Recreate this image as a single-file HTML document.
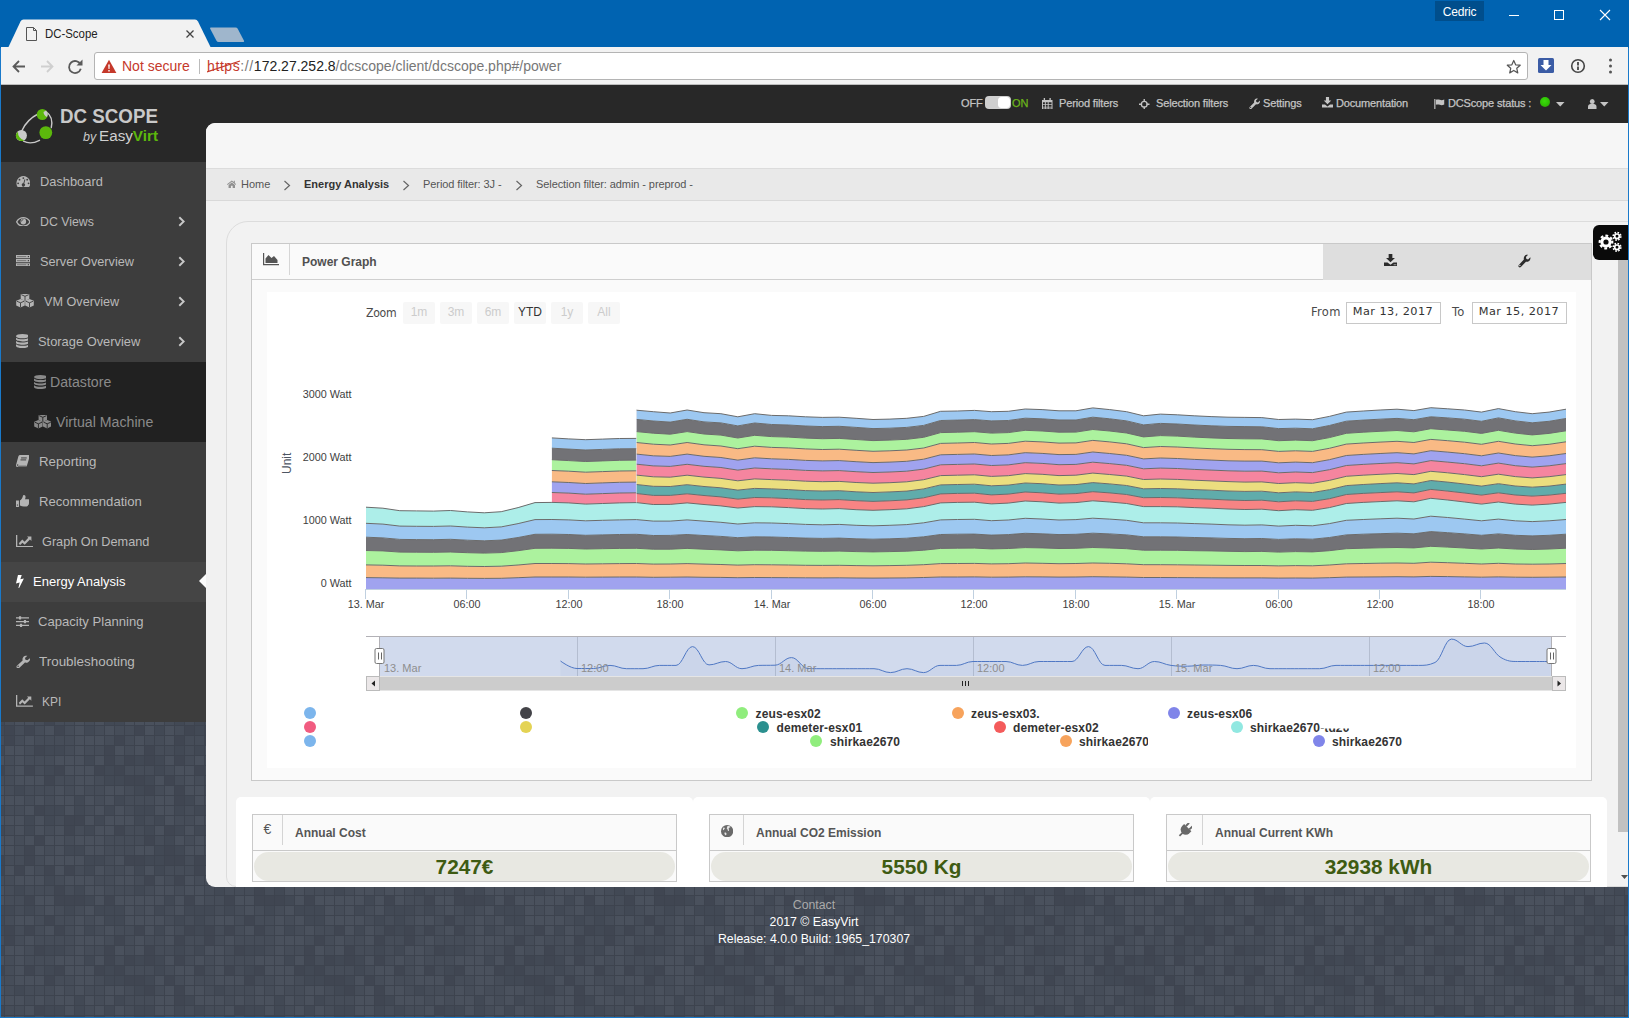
<!DOCTYPE html>
<html><head><meta charset="utf-8"><title>DC-Scope</title>
<style>
*{box-sizing:border-box}
html,body{margin:0;padding:0}
body{width:1629px;height:1018px;overflow:hidden;position:relative;background:#1979ca;font-family:"Liberation Sans",Arial,sans-serif;font-size:11px;color:#444}
.abs{position:absolute}
/* chrome */
#titlebar{position:absolute;left:0;top:0;width:1629px;height:48px;background:#0063b1}
#toolbar{position:absolute;left:1px;top:47px;width:1627px;height:38px;background:#f2f2f2;border-bottom:1px solid #bcbcbc}
#omni{position:absolute;left:93px;top:5px;width:1434px;height:28px;background:#fff;border:1px solid #b4b4b4;border-radius:3px}
#page{position:absolute;left:1px;top:85px;width:1627px;height:932px;overflow:hidden;background:#3d434e}
.bgpat{position:absolute;left:-1px;top:-85px}
#topnav{position:absolute;left:0;top:0;width:1627px;height:38px;background:#282828}
#logo{position:absolute;left:0;top:0;width:205px;height:77px;background:#282828}
#side{position:absolute;left:0;top:0;width:205px;height:637px}
.mi{position:absolute;left:0;width:205px;height:40px;background:#3d3d3d;color:#b9b9b9;font-size:13.5px;margin-top:-85px}
.mi.act{background:#454545;color:#fff}
.smi{position:absolute;left:0;width:205px;height:40px;background:#212121;color:#8a8a8a;font-size:15.5px;margin-top:-85px}
.mt{position:absolute;top:-0.500px;line-height:40px;white-space:nowrap;transform-origin:0 50%}
.chev{position:absolute;left:176.800px;top:13.800px;width:7px;height:11px}
.arr{position:absolute;right:0;top:12.300px;width:0;height:0;border-top:7.700px solid transparent;border-bottom:7.700px solid transparent;border-right:7.300px solid #fbfbfb}
#content{position:absolute;left:205px;top:38px;width:1422px;height:764px;background:#f1f1f1;border-radius:9px 0 0 9px;overflow:hidden}
#hdr{position:absolute;left:0;top:0;width:1422px;height:46px;background:#f6f6f6;border-bottom:1px solid #dcdcdc}
#bc{position:absolute;left:0;top:46px;width:1422px;height:32px;background:#e9e9e9;border-bottom:1px solid #d9d9d9;font-size:11px;color:#555}
#bc span{position:absolute;top:0;line-height:30px;white-space:nowrap}
#outer{position:absolute;left:20px;top:98px;width:1500px;height:666px;border:1px solid #dcdcdc;border-radius:22px 0 0 10px;background:#f2f2f2}
#panel{position:absolute;left:45px;top:120px;width:1341px;height:538px;border:1px solid #c9c9c9;background:#fafafa}
#phead{position:absolute;left:0;top:0;width:1339px;height:36px;border-bottom:1px solid #cfcfcf;background:#fafafa}
#ptools{position:absolute;left:1071px;top:0;width:268px;height:36px;background:#dedede}
#chart{position:absolute;left:15px;top:48px;width:1309px;height:476px;background:#fff}
.hc{position:absolute;left:0;top:0}
.hc text.ax{font-family:"Liberation Sans",Arial,sans-serif;font-size:10.800px;fill:#3e3e3e}
.hc text.ut{font-family:"Liberation Sans",Arial,sans-serif;font-size:12px;fill:#4d5663}
.hc text.nl{font-family:"Liberation Sans",Arial,sans-serif;font-size:11px;fill:#8e8e8e}
.zb{position:absolute;top:10px;width:32px;height:22px;background:#f7f7f7;border-radius:2px;color:#ccc;font-size:12px;line-height:21px;text-align:center}
.lg{position:absolute;font-weight:bold;font-size:12px;color:#333;white-space:nowrap;line-height:14px;letter-spacing:.13px}
.dot{position:absolute;width:12px;height:12px;border-radius:6px}
.cardw{position:absolute;top:674px;height:100px;background:#fff;border-radius:5px 5px 0 0}
.card{position:absolute;top:17px;left:16px;width:425px;height:68px;border:1px solid #c9c9c9;background:#fafafa}
.card .ci{position:absolute;left:0;top:0;width:30px;height:30px;border-right:1px solid #d4d4d4}
.card .ct{position:absolute;left:42px;top:1px;line-height:35px;font-weight:bold;font-size:12px;color:#555}
.card .cv{position:absolute;left:0;top:35px;width:423px;height:31px;border-top:1px solid #c9c9c9}
.card .pill{position:absolute;left:1px;top:1px;width:421px;height:29px;border-radius:15px;background:#e8e8e2;text-align:center;font-weight:bold;font-size:20.800px;line-height:30px;color:#3e5b12}
#foot{position:absolute;left:600px;top:812px;width:426px;text-align:center;color:#fff;font-size:12.300px;line-height:17px}
.tn{position:absolute;top:0;line-height:37px;color:#c4c4c4;font-size:11px;white-space:nowrap;-webkit-text-stroke:0.25px #c4c4c4;letter-spacing:-0.150px}
.dj{line-height:20.500px;font-size:11.500px;color:#4a4a4a;font-family:"DejaVu Sans","Liberation Sans",sans-serif;letter-spacing:.3px}
.di{width:95px;height:22px;border:1px solid #c8c8c8;background:#fff;text-align:center;line-height:18.500px;font-size:11.300px;color:#333;font-family:"DejaVu Sans","Liberation Sans",sans-serif;letter-spacing:.42px;white-space:nowrap;text-indent:-1px}
</style></head><body>
<div id="titlebar">
 <svg class="abs" style="left:0;top:0" width="1629" height="48">
  <path d="M8 48 L20.500 21.500 Q21.500 19.500 23.500 19.500 H195 Q197 19.500 198 21.500 L211 48z" fill="#f2f2f2"/>
  <path d="M211 27.500 h24.500 q1.500 0 2.200 1.300 l6.300 12 q.6 1.200-.8 1.200 h-24.500 q-1.500 0-2.200-1.300 l-6.300-12 q-.6-1.200 .8-1.200z" fill="#9fb6cc"/>
  <path d="M26.500 27.500h7l3 3v10h-10z M33.500 27.500v3h3" fill="none" stroke="#555" stroke-width="1"/>
  <path d="M186.500 30.500l7 7m0-7l-7 7" stroke="#444" stroke-width="1.300" fill="none"/>
  <rect x="1435" y="1" width="49" height="20" fill="#004e8c"/>
  <path d="M1509 15.500h10" stroke="#fff" stroke-width="1"/>
  <rect x="1554.500" y="10.500" width="9" height="9" fill="none" stroke="#fff" stroke-width="1"/>
  <path d="M1600 10l10 10m0-10l-10 10" stroke="#fff" stroke-width="1.100" fill="none"/>
 </svg>
 <span class="abs" style="left:45px;top:26px;font-size:12px;line-height:16px;color:#222;transform:scaleX(.95);transform-origin:0 0;white-space:nowrap">DC-Scope</span>
 <span class="abs" style="left:1435px;top:1px;width:49px;text-align:center;font-size:12px;line-height:22px;color:#fff;letter-spacing:-0.200px">Cedric</span>
</div>
<div id="toolbar">
 <svg class="abs" style="left:0;top:0" width="92" height="38">
  <path d="M24 19.500H12.500m5.500-5.500l-5.500 5.500 5.500 5.500" fill="none" stroke="#5a5a5a" stroke-width="1.800"/>
  <path d="M40 19.500h11.500m-5.500-5.500l5.500 5.500-5.500 5.500" fill="none" stroke="#cfcfcf" stroke-width="1.800"/>
  <path d="M79.500 17.500a6 6 0 1 0 .3 4.300" fill="none" stroke="#5a5a5a" stroke-width="1.800"/>
  <path d="M81.500 12.500v6h-6z" fill="#5a5a5a"/>
 </svg>
 <div id="omni">
  <svg class="abs" style="left:6px;top:6px" width="16" height="15"><path d="M8 .8L15.400 14H.6z" fill="#c5392b"/><path d="M7.200 5.500h1.600l-.3 4.500H7.500zM7.300 11h1.400v1.400H7.300z" fill="#fff"/></svg>
  <span class="abs" style="left:27px;top:0;line-height:26px;font-size:14px;color:#c5392b">Not secure</span>
  <i class="abs" style="left:104px;top:6px;width:1px;height:15px;background:#bbb"></i>
  <span class="abs" style="left:112px;top:0;line-height:26px;font-size:14px;color:#777;white-space:nowrap"><span style="letter-spacing:.6px"><span style="color:#c5392b">https</span>://</span><span style="color:#222">172.27.252.8</span>/dcscope/client/dcscope.php#/power</span>
  <svg class="abs" style="left:112px;top:6px" width="36" height="16"><path d="M0 13L33 2" stroke="#c5392b" stroke-width="1.300"/></svg>
  <svg class="abs" style="left:1411px;top:6px" width="15.500" height="15" viewBox="0 0 18 17"><path d="M9 1.500l2.200 5 5.300.5-4 3.600 1.200 5.300L9 13.100l-4.700 2.800 1.200-5.300-4-3.600 5.300-.5z" fill="none" stroke="#555" stroke-width="1.400" stroke-linejoin="round"/></svg>
 </div>
 <svg class="abs" style="left:1536px;top:10px" width="90" height="18">
  <rect x="1" y="1" width="16" height="15" rx="1.500" fill="#3b5ca5"/>
  <path d="M6.500 3h5v5h3L9 13.500 3.500 8h3z" fill="#fff"/>
  <circle cx="41" cy="9" r="6.300" fill="none" stroke="#444" stroke-width="1.600"/>
  <path d="M41 5v3.500M41 9.500v3.500" stroke="#444" stroke-width="1.800"/>
  <circle cx="73.500" cy="3" r="1.500" fill="#555"/><circle cx="73.500" cy="9" r="1.500" fill="#555"/><circle cx="73.500" cy="15" r="1.500" fill="#555"/>
 </svg>
</div>
<div id="page">
<svg class="bgpat" width="1629" height="1018"><defs><pattern id="tp" width="200" height="200" patternUnits="userSpaceOnUse" x="4" y="5"><rect width="200" height="200" fill="#3d434e"/><rect x="1" y="1" width="9" height="9" fill="#464d59"/><rect x="11" y="1" width="9" height="9" fill="#464d59"/><rect x="21" y="1" width="9" height="9" fill="#4a515d"/><rect x="31" y="1" width="9" height="9" fill="#404652"/><rect x="41" y="1" width="9" height="9" fill="#424955"/><rect x="51" y="1" width="9" height="9" fill="#424955"/><rect x="61" y="1" width="9" height="9" fill="#4a515d"/><rect x="71" y="1" width="9" height="9" fill="#424955"/><rect x="81" y="1" width="9" height="9" fill="#464d59"/><rect x="91" y="1" width="9" height="9" fill="#4a515d"/><rect x="101" y="1" width="9" height="9" fill="#424955"/><rect x="111" y="1" width="9" height="9" fill="#4a515d"/><rect x="121" y="1" width="9" height="9" fill="#464d59"/><rect x="131" y="1" width="9" height="9" fill="#424955"/><rect x="141" y="1" width="9" height="9" fill="#424955"/><rect x="151" y="1" width="9" height="9" fill="#4a515d"/><rect x="161" y="1" width="9" height="9" fill="#4a515d"/><rect x="171" y="1" width="9" height="9" fill="#424955"/><rect x="181" y="1" width="9" height="9" fill="#464d59"/><rect x="191" y="1" width="9" height="9" fill="#424955"/><rect x="1" y="11" width="9" height="9" fill="#4a515d"/><rect x="11" y="11" width="9" height="9" fill="#4a515d"/><rect x="21" y="11" width="9" height="9" fill="#424955"/><rect x="31" y="11" width="9" height="9" fill="#4a515d"/><rect x="41" y="11" width="9" height="9" fill="#424955"/><rect x="51" y="11" width="9" height="9" fill="#464d59"/><rect x="61" y="11" width="9" height="9" fill="#404652"/><rect x="71" y="11" width="9" height="9" fill="#404652"/><rect x="81" y="11" width="9" height="9" fill="#4a515d"/><rect x="91" y="11" width="9" height="9" fill="#424955"/><rect x="101" y="11" width="9" height="9" fill="#4a515d"/><rect x="111" y="11" width="9" height="9" fill="#4a515d"/><rect x="121" y="11" width="9" height="9" fill="#4a515d"/><rect x="131" y="11" width="9" height="9" fill="#424955"/><rect x="141" y="11" width="9" height="9" fill="#464d59"/><rect x="151" y="11" width="9" height="9" fill="#424955"/><rect x="161" y="11" width="9" height="9" fill="#4a515d"/><rect x="171" y="11" width="9" height="9" fill="#464d59"/><rect x="181" y="11" width="9" height="9" fill="#464d59"/><rect x="191" y="11" width="9" height="9" fill="#4a515d"/><rect x="1" y="21" width="9" height="9" fill="#464d59"/><rect x="11" y="21" width="9" height="9" fill="#4a515d"/><rect x="21" y="21" width="9" height="9" fill="#424955"/><rect x="31" y="21" width="9" height="9" fill="#4a515d"/><rect x="41" y="21" width="9" height="9" fill="#464d59"/><rect x="51" y="21" width="9" height="9" fill="#4a515d"/><rect x="61" y="21" width="9" height="9" fill="#404652"/><rect x="71" y="21" width="9" height="9" fill="#464d59"/><rect x="81" y="21" width="9" height="9" fill="#424955"/><rect x="91" y="21" width="9" height="9" fill="#4a515d"/><rect x="101" y="21" width="9" height="9" fill="#4a515d"/><rect x="111" y="21" width="9" height="9" fill="#404652"/><rect x="121" y="21" width="9" height="9" fill="#464d59"/><rect x="131" y="21" width="9" height="9" fill="#464d59"/><rect x="141" y="21" width="9" height="9" fill="#424955"/><rect x="151" y="21" width="9" height="9" fill="#4a515d"/><rect x="161" y="21" width="9" height="9" fill="#404652"/><rect x="171" y="21" width="9" height="9" fill="#424955"/><rect x="181" y="21" width="9" height="9" fill="#4a515d"/><rect x="191" y="21" width="9" height="9" fill="#424955"/><rect x="1" y="31" width="9" height="9" fill="#4a515d"/><rect x="11" y="31" width="9" height="9" fill="#464d59"/><rect x="21" y="31" width="9" height="9" fill="#4a515d"/><rect x="31" y="31" width="9" height="9" fill="#404652"/><rect x="41" y="31" width="9" height="9" fill="#4a515d"/><rect x="51" y="31" width="9" height="9" fill="#4a515d"/><rect x="61" y="31" width="9" height="9" fill="#464d59"/><rect x="71" y="31" width="9" height="9" fill="#4a515d"/><rect x="81" y="31" width="9" height="9" fill="#4a515d"/><rect x="91" y="31" width="9" height="9" fill="#4a515d"/><rect x="101" y="31" width="9" height="9" fill="#464d59"/><rect x="111" y="31" width="9" height="9" fill="#464d59"/><rect x="121" y="31" width="9" height="9" fill="#464d59"/><rect x="131" y="31" width="9" height="9" fill="#464d59"/><rect x="141" y="31" width="9" height="9" fill="#404652"/><rect x="151" y="31" width="9" height="9" fill="#464d59"/><rect x="161" y="31" width="9" height="9" fill="#424955"/><rect x="171" y="31" width="9" height="9" fill="#4a515d"/><rect x="181" y="31" width="9" height="9" fill="#464d59"/><rect x="191" y="31" width="9" height="9" fill="#4a515d"/><rect x="1" y="41" width="9" height="9" fill="#4a515d"/><rect x="11" y="41" width="9" height="9" fill="#464d59"/><rect x="21" y="41" width="9" height="9" fill="#404652"/><rect x="31" y="41" width="9" height="9" fill="#4a515d"/><rect x="41" y="41" width="9" height="9" fill="#464d59"/><rect x="51" y="41" width="9" height="9" fill="#4a515d"/><rect x="61" y="41" width="9" height="9" fill="#424955"/><rect x="71" y="41" width="9" height="9" fill="#424955"/><rect x="81" y="41" width="9" height="9" fill="#4a515d"/><rect x="91" y="41" width="9" height="9" fill="#4a515d"/><rect x="101" y="41" width="9" height="9" fill="#464d59"/><rect x="111" y="41" width="9" height="9" fill="#464d59"/><rect x="121" y="41" width="9" height="9" fill="#464d59"/><rect x="131" y="41" width="9" height="9" fill="#4a515d"/><rect x="141" y="41" width="9" height="9" fill="#4a515d"/><rect x="151" y="41" width="9" height="9" fill="#424955"/><rect x="161" y="41" width="9" height="9" fill="#404652"/><rect x="171" y="41" width="9" height="9" fill="#424955"/><rect x="181" y="41" width="9" height="9" fill="#4a515d"/><rect x="191" y="41" width="9" height="9" fill="#4a515d"/><rect x="1" y="51" width="9" height="9" fill="#464d59"/><rect x="11" y="51" width="9" height="9" fill="#464d59"/><rect x="21" y="51" width="9" height="9" fill="#404652"/><rect x="31" y="51" width="9" height="9" fill="#464d59"/><rect x="41" y="51" width="9" height="9" fill="#4a515d"/><rect x="51" y="51" width="9" height="9" fill="#4a515d"/><rect x="61" y="51" width="9" height="9" fill="#4a515d"/><rect x="71" y="51" width="9" height="9" fill="#4a515d"/><rect x="81" y="51" width="9" height="9" fill="#424955"/><rect x="91" y="51" width="9" height="9" fill="#424955"/><rect x="101" y="51" width="9" height="9" fill="#464d59"/><rect x="111" y="51" width="9" height="9" fill="#4a515d"/><rect x="121" y="51" width="9" height="9" fill="#404652"/><rect x="131" y="51" width="9" height="9" fill="#404652"/><rect x="141" y="51" width="9" height="9" fill="#424955"/><rect x="151" y="51" width="9" height="9" fill="#424955"/><rect x="161" y="51" width="9" height="9" fill="#404652"/><rect x="171" y="51" width="9" height="9" fill="#404652"/><rect x="181" y="51" width="9" height="9" fill="#464d59"/><rect x="191" y="51" width="9" height="9" fill="#404652"/><rect x="1" y="61" width="9" height="9" fill="#4a515d"/><rect x="11" y="61" width="9" height="9" fill="#404652"/><rect x="21" y="61" width="9" height="9" fill="#4a515d"/><rect x="31" y="61" width="9" height="9" fill="#464d59"/><rect x="41" y="61" width="9" height="9" fill="#404652"/><rect x="51" y="61" width="9" height="9" fill="#4a515d"/><rect x="61" y="61" width="9" height="9" fill="#404652"/><rect x="71" y="61" width="9" height="9" fill="#464d59"/><rect x="81" y="61" width="9" height="9" fill="#424955"/><rect x="91" y="61" width="9" height="9" fill="#4a515d"/><rect x="101" y="61" width="9" height="9" fill="#464d59"/><rect x="111" y="61" width="9" height="9" fill="#464d59"/><rect x="121" y="61" width="9" height="9" fill="#4a515d"/><rect x="131" y="61" width="9" height="9" fill="#424955"/><rect x="141" y="61" width="9" height="9" fill="#4a515d"/><rect x="151" y="61" width="9" height="9" fill="#424955"/><rect x="161" y="61" width="9" height="9" fill="#464d59"/><rect x="171" y="61" width="9" height="9" fill="#464d59"/><rect x="181" y="61" width="9" height="9" fill="#464d59"/><rect x="191" y="61" width="9" height="9" fill="#404652"/><rect x="1" y="71" width="9" height="9" fill="#464d59"/><rect x="11" y="71" width="9" height="9" fill="#4a515d"/><rect x="21" y="71" width="9" height="9" fill="#4a515d"/><rect x="31" y="71" width="9" height="9" fill="#4a515d"/><rect x="41" y="71" width="9" height="9" fill="#424955"/><rect x="51" y="71" width="9" height="9" fill="#464d59"/><rect x="61" y="71" width="9" height="9" fill="#4a515d"/><rect x="71" y="71" width="9" height="9" fill="#4a515d"/><rect x="81" y="71" width="9" height="9" fill="#4a515d"/><rect x="91" y="71" width="9" height="9" fill="#464d59"/><rect x="101" y="71" width="9" height="9" fill="#464d59"/><rect x="111" y="71" width="9" height="9" fill="#4a515d"/><rect x="121" y="71" width="9" height="9" fill="#4a515d"/><rect x="131" y="71" width="9" height="9" fill="#464d59"/><rect x="141" y="71" width="9" height="9" fill="#404652"/><rect x="151" y="71" width="9" height="9" fill="#4a515d"/><rect x="161" y="71" width="9" height="9" fill="#464d59"/><rect x="171" y="71" width="9" height="9" fill="#404652"/><rect x="181" y="71" width="9" height="9" fill="#4a515d"/><rect x="191" y="71" width="9" height="9" fill="#464d59"/><rect x="1" y="81" width="9" height="9" fill="#464d59"/><rect x="11" y="81" width="9" height="9" fill="#424955"/><rect x="21" y="81" width="9" height="9" fill="#464d59"/><rect x="31" y="81" width="9" height="9" fill="#464d59"/><rect x="41" y="81" width="9" height="9" fill="#464d59"/><rect x="51" y="81" width="9" height="9" fill="#404652"/><rect x="61" y="81" width="9" height="9" fill="#464d59"/><rect x="71" y="81" width="9" height="9" fill="#424955"/><rect x="81" y="81" width="9" height="9" fill="#4a515d"/><rect x="91" y="81" width="9" height="9" fill="#4a515d"/><rect x="101" y="81" width="9" height="9" fill="#464d59"/><rect x="111" y="81" width="9" height="9" fill="#464d59"/><rect x="121" y="81" width="9" height="9" fill="#464d59"/><rect x="131" y="81" width="9" height="9" fill="#424955"/><rect x="141" y="81" width="9" height="9" fill="#464d59"/><rect x="151" y="81" width="9" height="9" fill="#4a515d"/><rect x="161" y="81" width="9" height="9" fill="#4a515d"/><rect x="171" y="81" width="9" height="9" fill="#464d59"/><rect x="181" y="81" width="9" height="9" fill="#4a515d"/><rect x="191" y="81" width="9" height="9" fill="#4a515d"/><rect x="1" y="91" width="9" height="9" fill="#464d59"/><rect x="11" y="91" width="9" height="9" fill="#464d59"/><rect x="21" y="91" width="9" height="9" fill="#404652"/><rect x="31" y="91" width="9" height="9" fill="#4a515d"/><rect x="41" y="91" width="9" height="9" fill="#4a515d"/><rect x="51" y="91" width="9" height="9" fill="#404652"/><rect x="61" y="91" width="9" height="9" fill="#404652"/><rect x="71" y="91" width="9" height="9" fill="#404652"/><rect x="81" y="91" width="9" height="9" fill="#424955"/><rect x="91" y="91" width="9" height="9" fill="#4a515d"/><rect x="101" y="91" width="9" height="9" fill="#404652"/><rect x="111" y="91" width="9" height="9" fill="#4a515d"/><rect x="121" y="91" width="9" height="9" fill="#4a515d"/><rect x="131" y="91" width="9" height="9" fill="#4a515d"/><rect x="141" y="91" width="9" height="9" fill="#4a515d"/><rect x="151" y="91" width="9" height="9" fill="#4a515d"/><rect x="161" y="91" width="9" height="9" fill="#424955"/><rect x="171" y="91" width="9" height="9" fill="#4a515d"/><rect x="181" y="91" width="9" height="9" fill="#404652"/><rect x="191" y="91" width="9" height="9" fill="#4a515d"/><rect x="1" y="101" width="9" height="9" fill="#424955"/><rect x="11" y="101" width="9" height="9" fill="#464d59"/><rect x="21" y="101" width="9" height="9" fill="#424955"/><rect x="31" y="101" width="9" height="9" fill="#464d59"/><rect x="41" y="101" width="9" height="9" fill="#4a515d"/><rect x="51" y="101" width="9" height="9" fill="#464d59"/><rect x="61" y="101" width="9" height="9" fill="#424955"/><rect x="71" y="101" width="9" height="9" fill="#464d59"/><rect x="81" y="101" width="9" height="9" fill="#4a515d"/><rect x="91" y="101" width="9" height="9" fill="#424955"/><rect x="101" y="101" width="9" height="9" fill="#424955"/><rect x="111" y="101" width="9" height="9" fill="#424955"/><rect x="121" y="101" width="9" height="9" fill="#4a515d"/><rect x="131" y="101" width="9" height="9" fill="#464d59"/><rect x="141" y="101" width="9" height="9" fill="#4a515d"/><rect x="151" y="101" width="9" height="9" fill="#424955"/><rect x="161" y="101" width="9" height="9" fill="#464d59"/><rect x="171" y="101" width="9" height="9" fill="#4a515d"/><rect x="181" y="101" width="9" height="9" fill="#424955"/><rect x="191" y="101" width="9" height="9" fill="#424955"/><rect x="1" y="111" width="9" height="9" fill="#464d59"/><rect x="11" y="111" width="9" height="9" fill="#4a515d"/><rect x="21" y="111" width="9" height="9" fill="#4a515d"/><rect x="31" y="111" width="9" height="9" fill="#464d59"/><rect x="41" y="111" width="9" height="9" fill="#404652"/><rect x="51" y="111" width="9" height="9" fill="#464d59"/><rect x="61" y="111" width="9" height="9" fill="#464d59"/><rect x="71" y="111" width="9" height="9" fill="#4a515d"/><rect x="81" y="111" width="9" height="9" fill="#464d59"/><rect x="91" y="111" width="9" height="9" fill="#4a515d"/><rect x="101" y="111" width="9" height="9" fill="#424955"/><rect x="111" y="111" width="9" height="9" fill="#424955"/><rect x="121" y="111" width="9" height="9" fill="#4a515d"/><rect x="131" y="111" width="9" height="9" fill="#4a515d"/><rect x="141" y="111" width="9" height="9" fill="#4a515d"/><rect x="151" y="111" width="9" height="9" fill="#4a515d"/><rect x="161" y="111" width="9" height="9" fill="#464d59"/><rect x="171" y="111" width="9" height="9" fill="#424955"/><rect x="181" y="111" width="9" height="9" fill="#464d59"/><rect x="191" y="111" width="9" height="9" fill="#424955"/><rect x="1" y="121" width="9" height="9" fill="#404652"/><rect x="11" y="121" width="9" height="9" fill="#464d59"/><rect x="21" y="121" width="9" height="9" fill="#404652"/><rect x="31" y="121" width="9" height="9" fill="#464d59"/><rect x="41" y="121" width="9" height="9" fill="#4a515d"/><rect x="51" y="121" width="9" height="9" fill="#404652"/><rect x="61" y="121" width="9" height="9" fill="#464d59"/><rect x="71" y="121" width="9" height="9" fill="#4a515d"/><rect x="81" y="121" width="9" height="9" fill="#424955"/><rect x="91" y="121" width="9" height="9" fill="#464d59"/><rect x="101" y="121" width="9" height="9" fill="#4a515d"/><rect x="111" y="121" width="9" height="9" fill="#464d59"/><rect x="121" y="121" width="9" height="9" fill="#464d59"/><rect x="131" y="121" width="9" height="9" fill="#404652"/><rect x="141" y="121" width="9" height="9" fill="#4a515d"/><rect x="151" y="121" width="9" height="9" fill="#424955"/><rect x="161" y="121" width="9" height="9" fill="#4a515d"/><rect x="171" y="121" width="9" height="9" fill="#464d59"/><rect x="181" y="121" width="9" height="9" fill="#404652"/><rect x="191" y="121" width="9" height="9" fill="#424955"/><rect x="1" y="131" width="9" height="9" fill="#404652"/><rect x="11" y="131" width="9" height="9" fill="#464d59"/><rect x="21" y="131" width="9" height="9" fill="#4a515d"/><rect x="31" y="131" width="9" height="9" fill="#464d59"/><rect x="41" y="131" width="9" height="9" fill="#464d59"/><rect x="51" y="131" width="9" height="9" fill="#464d59"/><rect x="61" y="131" width="9" height="9" fill="#464d59"/><rect x="71" y="131" width="9" height="9" fill="#4a515d"/><rect x="81" y="131" width="9" height="9" fill="#4a515d"/><rect x="91" y="131" width="9" height="9" fill="#4a515d"/><rect x="101" y="131" width="9" height="9" fill="#464d59"/><rect x="111" y="131" width="9" height="9" fill="#404652"/><rect x="121" y="131" width="9" height="9" fill="#464d59"/><rect x="131" y="131" width="9" height="9" fill="#4a515d"/><rect x="141" y="131" width="9" height="9" fill="#464d59"/><rect x="151" y="131" width="9" height="9" fill="#464d59"/><rect x="161" y="131" width="9" height="9" fill="#4a515d"/><rect x="171" y="131" width="9" height="9" fill="#404652"/><rect x="181" y="131" width="9" height="9" fill="#464d59"/><rect x="191" y="131" width="9" height="9" fill="#464d59"/><rect x="1" y="141" width="9" height="9" fill="#4a515d"/><rect x="11" y="141" width="9" height="9" fill="#4a515d"/><rect x="21" y="141" width="9" height="9" fill="#464d59"/><rect x="31" y="141" width="9" height="9" fill="#404652"/><rect x="41" y="141" width="9" height="9" fill="#424955"/><rect x="51" y="141" width="9" height="9" fill="#424955"/><rect x="61" y="141" width="9" height="9" fill="#464d59"/><rect x="71" y="141" width="9" height="9" fill="#4a515d"/><rect x="81" y="141" width="9" height="9" fill="#464d59"/><rect x="91" y="141" width="9" height="9" fill="#464d59"/><rect x="101" y="141" width="9" height="9" fill="#404652"/><rect x="111" y="141" width="9" height="9" fill="#4a515d"/><rect x="121" y="141" width="9" height="9" fill="#464d59"/><rect x="131" y="141" width="9" height="9" fill="#4a515d"/><rect x="141" y="141" width="9" height="9" fill="#404652"/><rect x="151" y="141" width="9" height="9" fill="#464d59"/><rect x="161" y="141" width="9" height="9" fill="#464d59"/><rect x="171" y="141" width="9" height="9" fill="#424955"/><rect x="181" y="141" width="9" height="9" fill="#464d59"/><rect x="191" y="141" width="9" height="9" fill="#424955"/><rect x="1" y="151" width="9" height="9" fill="#464d59"/><rect x="11" y="151" width="9" height="9" fill="#4a515d"/><rect x="21" y="151" width="9" height="9" fill="#464d59"/><rect x="31" y="151" width="9" height="9" fill="#464d59"/><rect x="41" y="151" width="9" height="9" fill="#464d59"/><rect x="51" y="151" width="9" height="9" fill="#4a515d"/><rect x="61" y="151" width="9" height="9" fill="#4a515d"/><rect x="71" y="151" width="9" height="9" fill="#4a515d"/><rect x="81" y="151" width="9" height="9" fill="#424955"/><rect x="91" y="151" width="9" height="9" fill="#4a515d"/><rect x="101" y="151" width="9" height="9" fill="#404652"/><rect x="111" y="151" width="9" height="9" fill="#464d59"/><rect x="121" y="151" width="9" height="9" fill="#404652"/><rect x="131" y="151" width="9" height="9" fill="#424955"/><rect x="141" y="151" width="9" height="9" fill="#404652"/><rect x="151" y="151" width="9" height="9" fill="#424955"/><rect x="161" y="151" width="9" height="9" fill="#4a515d"/><rect x="171" y="151" width="9" height="9" fill="#404652"/><rect x="181" y="151" width="9" height="9" fill="#464d59"/><rect x="191" y="151" width="9" height="9" fill="#4a515d"/><rect x="1" y="161" width="9" height="9" fill="#464d59"/><rect x="11" y="161" width="9" height="9" fill="#4a515d"/><rect x="21" y="161" width="9" height="9" fill="#404652"/><rect x="31" y="161" width="9" height="9" fill="#464d59"/><rect x="41" y="161" width="9" height="9" fill="#424955"/><rect x="51" y="161" width="9" height="9" fill="#404652"/><rect x="61" y="161" width="9" height="9" fill="#4a515d"/><rect x="71" y="161" width="9" height="9" fill="#4a515d"/><rect x="81" y="161" width="9" height="9" fill="#4a515d"/><rect x="91" y="161" width="9" height="9" fill="#404652"/><rect x="101" y="161" width="9" height="9" fill="#424955"/><rect x="111" y="161" width="9" height="9" fill="#404652"/><rect x="121" y="161" width="9" height="9" fill="#464d59"/><rect x="131" y="161" width="9" height="9" fill="#464d59"/><rect x="141" y="161" width="9" height="9" fill="#464d59"/><rect x="151" y="161" width="9" height="9" fill="#424955"/><rect x="161" y="161" width="9" height="9" fill="#464d59"/><rect x="171" y="161" width="9" height="9" fill="#4a515d"/><rect x="181" y="161" width="9" height="9" fill="#4a515d"/><rect x="191" y="161" width="9" height="9" fill="#404652"/><rect x="1" y="171" width="9" height="9" fill="#464d59"/><rect x="11" y="171" width="9" height="9" fill="#4a515d"/><rect x="21" y="171" width="9" height="9" fill="#4a515d"/><rect x="31" y="171" width="9" height="9" fill="#4a515d"/><rect x="41" y="171" width="9" height="9" fill="#404652"/><rect x="51" y="171" width="9" height="9" fill="#464d59"/><rect x="61" y="171" width="9" height="9" fill="#464d59"/><rect x="71" y="171" width="9" height="9" fill="#4a515d"/><rect x="81" y="171" width="9" height="9" fill="#4a515d"/><rect x="91" y="171" width="9" height="9" fill="#464d59"/><rect x="101" y="171" width="9" height="9" fill="#424955"/><rect x="111" y="171" width="9" height="9" fill="#424955"/><rect x="121" y="171" width="9" height="9" fill="#404652"/><rect x="131" y="171" width="9" height="9" fill="#404652"/><rect x="141" y="171" width="9" height="9" fill="#424955"/><rect x="151" y="171" width="9" height="9" fill="#4a515d"/><rect x="161" y="171" width="9" height="9" fill="#404652"/><rect x="171" y="171" width="9" height="9" fill="#464d59"/><rect x="181" y="171" width="9" height="9" fill="#4a515d"/><rect x="191" y="171" width="9" height="9" fill="#464d59"/><rect x="1" y="181" width="9" height="9" fill="#464d59"/><rect x="11" y="181" width="9" height="9" fill="#424955"/><rect x="21" y="181" width="9" height="9" fill="#464d59"/><rect x="31" y="181" width="9" height="9" fill="#464d59"/><rect x="41" y="181" width="9" height="9" fill="#464d59"/><rect x="51" y="181" width="9" height="9" fill="#4a515d"/><rect x="61" y="181" width="9" height="9" fill="#464d59"/><rect x="71" y="181" width="9" height="9" fill="#4a515d"/><rect x="81" y="181" width="9" height="9" fill="#464d59"/><rect x="91" y="181" width="9" height="9" fill="#464d59"/><rect x="101" y="181" width="9" height="9" fill="#4a515d"/><rect x="111" y="181" width="9" height="9" fill="#4a515d"/><rect x="121" y="181" width="9" height="9" fill="#464d59"/><rect x="131" y="181" width="9" height="9" fill="#424955"/><rect x="141" y="181" width="9" height="9" fill="#404652"/><rect x="151" y="181" width="9" height="9" fill="#464d59"/><rect x="161" y="181" width="9" height="9" fill="#4a515d"/><rect x="171" y="181" width="9" height="9" fill="#404652"/><rect x="181" y="181" width="9" height="9" fill="#4a515d"/><rect x="191" y="181" width="9" height="9" fill="#4a515d"/><rect x="1" y="191" width="9" height="9" fill="#4a515d"/><rect x="11" y="191" width="9" height="9" fill="#4a515d"/><rect x="21" y="191" width="9" height="9" fill="#464d59"/><rect x="31" y="191" width="9" height="9" fill="#4a515d"/><rect x="41" y="191" width="9" height="9" fill="#464d59"/><rect x="51" y="191" width="9" height="9" fill="#4a515d"/><rect x="61" y="191" width="9" height="9" fill="#4a515d"/><rect x="71" y="191" width="9" height="9" fill="#424955"/><rect x="81" y="191" width="9" height="9" fill="#4a515d"/><rect x="91" y="191" width="9" height="9" fill="#464d59"/><rect x="101" y="191" width="9" height="9" fill="#4a515d"/><rect x="111" y="191" width="9" height="9" fill="#424955"/><rect x="121" y="191" width="9" height="9" fill="#464d59"/><rect x="131" y="191" width="9" height="9" fill="#464d59"/><rect x="141" y="191" width="9" height="9" fill="#464d59"/><rect x="151" y="191" width="9" height="9" fill="#4a515d"/><rect x="161" y="191" width="9" height="9" fill="#4a515d"/><rect x="171" y="191" width="9" height="9" fill="#404652"/><rect x="181" y="191" width="9" height="9" fill="#424955"/><rect x="191" y="191" width="9" height="9" fill="#4a515d"/></pattern></defs><rect width="1629" height="1018" fill="url(#tp)"/></svg>
<div id="topnav"></div><div class="abs" style="left:205px;top:38px;width:12px;height:12px;background:#282828"></div>
<div id="logo">
 <svg class="abs" style="left:14px;top:23px" width="42" height="40" viewBox="0 0 42 40">
  <g fill="none" stroke="#c9c9c9" stroke-width="1.400" stroke-linecap="round"><path d="M7 22.500Q12 11.500 23 6"/><path d="M31.500 4Q38.500 9 36.300 19.500"/><path d="M8.500 33.200Q15.500 37 24.500 32.300"/></g>
  <circle cx="6.400" cy="27.500" r="5.500" fill="#c9c9c9"/><path d="M1 26.500a5.500 5.500 0 0 0 8.300 5.700 8 8 0 0 1 -6.300-8.500 5.500 5.500 0 0 0 -2 2.800z" fill="#5cb80c"/>
  <circle cx="27.300" cy="6.500" r="5.500" fill="#5cb80c"/><path d="M31 2.500a5.500 5.500 0 0 1 1 6.500 6 6 0 0 1 -3.500-5z" fill="#c9c9c9"/>
  <circle cx="30.800" cy="24.600" r="6.400" fill="#5cb80c"/>
 </svg>
 <span class="abs" style="left:59px;top:18.300px;font-size:20.300px;line-height:26px;font-weight:bold;color:#c9c9c9;white-space:nowrap;transform:scaleX(.925);transform-origin:0 0">DC SCOPE</span>
 <span class="abs" style="left:82px;top:42px;font-size:12.500px;line-height:20px;font-style:italic;color:#c9c9c9">by</span>
 <span class="abs" style="left:98px;top:39.500px;font-size:14.700px;line-height:22px;color:#d0d0d0;white-space:nowrap;transform:scaleX(1.037);transform-origin:0 0">Easy<b style="color:#5cb80c">Virt</b></span>
</div>
<div id="side">
<div class="mi" style="top:162px"><svg style="position:absolute;left:14.7px;top:14px;width:14.7px;height:11px;" viewBox="0 0 16 12" preserveAspectRatio="none"><path d="M8 0a8 8 0 0 0-6.800 11.300c.2.400.6.700 1 .700h11.600c.4 0 .8-.3 1-.700A8 8 0 0 0 8 0z" fill="#b4b4b4"/><g fill="#3d3d3d"><circle cx="8" cy="2.300" r="1"/><circle cx="3.800" cy="4" r="1"/><circle cx="12.200" cy="4" r="1"/><circle cx="2.300" cy="8" r="1"/><circle cx="13.700" cy="8" r="1"/><path d="M9.300 3.600l.9.300-1.200 4.400a1.700 1.700 0 1 1-1-.3z"/></g></svg><span class="mt" style="left:39.4px;transform:scaleX(0.951)">Dashboard</span></div>
<div class="mi" style="top:202px"><svg style="position:absolute;left:14.7px;top:14.5px;width:14.7px;height:9.8px;" viewBox="0 0 16 10" preserveAspectRatio="none"><path d="M.7 5C2.200 2.300 5 .7 8 .7s5.800 1.600 7.300 4.300C13.800 7.700 11 9.300 8 9.300S2.200 7.700 .7 5z" fill="none" stroke="#b4b4b4" stroke-width="1.400"/><circle cx="8" cy="4.600" r="3" fill="#b4b4b4"/><path d="M8 2.600a2 2 0 0 0-2 2" fill="none" stroke="#3d3d3d" stroke-width=".8"/></svg><span class="mt" style="left:39.4px;transform:scaleX(0.913)">DC Views</span><svg class="chev" viewBox="0 0 8 12"><path d="M1.500 1.200l5 4.800-5 4.800" fill="none" stroke="#c8c8c8" stroke-width="2.200"/></svg></div>
<div class="mi" style="top:242px"><svg style="position:absolute;left:14.7px;top:12.9px;width:14.7px;height:11.3px;" viewBox="0 0 15 11.400" preserveAspectRatio="none"><path d="M0 0h15v3.200H0zM0 4.100h15v3.200H0zM0 8.200h15v3.200H0z" fill="#b4b4b4"/><g fill="#3d3d3d"><rect x="1" y="1.100" width="9.500" height="1" opacity=".55"/><rect x="1" y="5.200" width="9.500" height="1" opacity=".55"/><rect x="1" y="9.300" width="9.500" height="1" opacity=".55"/><rect x="12" y="1" width="1.300" height="1.200"/><rect x="12" y="5.100" width="1.300" height="1.200"/><rect x="12" y="9.200" width="1.300" height="1.200"/></g></svg><span class="mt" style="left:39.4px;transform:scaleX(0.942)">Server Overview</span><svg class="chev" viewBox="0 0 8 12"><path d="M1.500 1.200l5 4.800-5 4.800" fill="none" stroke="#c8c8c8" stroke-width="2.200"/></svg></div>
<div class="mi" style="top:282px"><svg style="position:absolute;left:14.5px;top:12px;width:18px;height:14px;" viewBox="0 0 18 14" preserveAspectRatio="none"><g fill="#b4b4b4"><path d="M4.7 0.30000000000000027l4.300 -1.900 4.300 1.900v4.600l-4.300 2 -4.300 -2z" /><path d="M5.3 0.7000000000000002l3.700 1.600 3.700 -1.600M9 2.3000000000000003v4.600" stroke="#3d3d3d" stroke-width=".9" fill="none"/><path d="M0.20000000000000018 6.799999999999999l4.300 -1.900 4.300 1.900v4.600l-4.300 2 -4.300 -2z" /><path d="M0.7999999999999998 7.199999999999999l3.700 1.600 3.700 -1.600M4.5 8.799999999999999v4.600" stroke="#3d3d3d" stroke-width=".9" fill="none"/><path d="M9.2 6.799999999999999l4.300 -1.900 4.300 1.900v4.600l-4.300 2 -4.300 -2z" /><path d="M9.8 7.199999999999999l3.700 1.600 3.700 -1.600M13.5 8.799999999999999v4.600" stroke="#3d3d3d" stroke-width=".9" fill="none"/></g></svg><span class="mt" style="left:43.2px;transform:scaleX(0.937)">VM Overview</span><svg class="chev" viewBox="0 0 8 12"><path d="M1.500 1.200l5 4.800-5 4.800" fill="none" stroke="#c8c8c8" stroke-width="2.200"/></svg></div>
<div class="mi" style="top:322px"><svg style="position:absolute;left:14.5px;top:12px;width:12.9px;height:14.2px;" viewBox="0 0 13 14" preserveAspectRatio="none"><g fill="#b4b4b4"><ellipse cx="6.500" cy="2.100" rx="6.500" ry="2.100"/><path d="M0 3.600c1.300 1 3.800 1.500 6.500 1.500S11.700 4.600 13 3.600v1.700c0 1.100-2.900 2-6.500 2S0 6.400 0 5.300zM0 6.900c1.300 1 3.800 1.500 6.500 1.500S11.700 7.900 13 6.900v1.700c0 1.100-2.900 2-6.500 2S0 9.700 0 8.600zM0 10.200c1.300 1 3.800 1.500 6.500 1.500s5.200-.5 6.500-1.500v1.700c0 1.100-2.900 2.100-6.500 2.100S0 13 0 11.900z"/></g></svg><span class="mt" style="left:37.3px;transform:scaleX(0.953)">Storage Overview</span><svg class="chev" viewBox="0 0 8 12"><path d="M1.500 1.200l5 4.800-5 4.800" fill="none" stroke="#c8c8c8" stroke-width="2.200"/></svg></div>
<div class="smi" style="top:362px"><svg style="position:absolute;left:32.6px;top:13px;width:12.9px;height:14px;" viewBox="0 0 13 14" preserveAspectRatio="none"><g fill="#8a8a8a"><ellipse cx="6.500" cy="2.100" rx="6.500" ry="2.100"/><path d="M0 3.600c1.300 1 3.800 1.500 6.500 1.500S11.700 4.600 13 3.600v1.700c0 1.100-2.900 2-6.500 2S0 6.400 0 5.300zM0 6.900c1.300 1 3.800 1.500 6.500 1.500S11.700 7.900 13 6.900v1.700c0 1.100-2.900 2-6.500 2S0 9.700 0 8.600zM0 10.200c1.300 1 3.800 1.500 6.500 1.500s5.200-.5 6.500-1.500v1.700c0 1.100-2.900 2.100-6.500 2.100S0 13 0 11.900z"/></g></svg><span class="mt" style="left:49.100px;transform:scaleX(0.912)">Datastore</span></div>
<div class="smi" style="top:402px"><svg style="position:absolute;left:32.6px;top:13px;width:17.6px;height:14px;" viewBox="0 0 18 14" preserveAspectRatio="none"><g fill="#8a8a8a"><path d="M4.7 0.30000000000000027l4.300 -1.900 4.300 1.900v4.600l-4.300 2 -4.300 -2z" /><path d="M5.3 0.7000000000000002l3.700 1.600 3.700 -1.600M9 2.3000000000000003v4.600" stroke="#212121" stroke-width=".9" fill="none"/><path d="M0.20000000000000018 6.799999999999999l4.300 -1.900 4.300 1.900v4.600l-4.300 2 -4.300 -2z" /><path d="M0.7999999999999998 7.199999999999999l3.700 1.600 3.700 -1.600M4.5 8.799999999999999v4.600" stroke="#212121" stroke-width=".9" fill="none"/><path d="M9.2 6.799999999999999l4.300 -1.900 4.300 1.900v4.600l-4.300 2 -4.300 -2z" /><path d="M9.8 7.199999999999999l3.700 1.600 3.700 -1.600M13.5 8.799999999999999v4.600" stroke="#212121" stroke-width=".9" fill="none"/></g></svg><span class="mt" style="left:55px;transform:scaleX(0.913)">Virtual Machine</span></div>
<div class="mi" style="top:442px"><svg style="position:absolute;left:14.5px;top:12.7px;width:13.7px;height:12.3px;" viewBox="0 0 14 12.500" preserveAspectRatio="none"><path d="M4.300 0h8.400c.9 0 1.500.8 1.200 1.700l-2.600 8.800c-.3 1.200-1.200 2-2.400 2H2c-1.300 0-2.300-1.200-1.900-2.500L2.400 1.500C2.700 .6 3.400 0 4.300 0z" fill="#b4b4b4"/><path d="M5.200 3h5.800M4.600 5h5.800" stroke="#3d3d3d" stroke-width="1"/><path d="M1.900 9.300l-.4 1.200c-.1.500.2.900.7.900h8.300" stroke="#3d3d3d" stroke-width=".9" fill="none"/></svg><span class="mt" style="left:38.2px;transform:scaleX(0.982)">Reporting</span></div>
<div class="mi" style="top:482px"><svg style="position:absolute;left:14.5px;top:13px;width:13.7px;height:12px;" viewBox="0 0 14 12" preserveAspectRatio="none"><path d="M0 5.500h3v6.500H0zM4 5.500c1.500-1 2.600-2.300 3-4.200C7.100 .6 7.500 0 8.200 0c1 0 1.600.9 1.600 2 0 .9-.3 1.600-.7 2.300h3.400c.8 0 1.500.6 1.500 1.300 0 .4-.2.800-.5 1 .2.300.3.500.3.800 0 .5-.3.900-.7 1.100.1.200.1.300.1.500 0 .5-.3.900-.8 1.100 0 .8-.7 1.300-1.600 1.300H8c-1.300 0-2.500-.3-4-.9z" fill="#b4b4b4"/><rect x=".9" y="9.500" width="1.100" height="1.100" fill="#3d3d3d"/></svg><span class="mt" style="left:38.2px;transform:scaleX(0.972)">Recommendation</span></div>
<div class="mi" style="top:522px"><svg style="position:absolute;left:14.5px;top:13px;width:17px;height:12.3px;" viewBox="0 0 17 12" preserveAspectRatio="none"><path d="M0 0h1.300v10.700H17V12H0zM2.800 8l3.500-3.600 2.300 2.100L12.300 2.800 11 1.500h4.400v4.300l-1.400-1.400-5.300 5.200-2.300-2.100-2.400 2.500z" fill="#b4b4b4"/></svg><span class="mt" style="left:41.1px;transform:scaleX(0.941)">Graph On Demand</span></div>
<div class="mi act" style="top:562px"><svg style="position:absolute;left:14.9px;top:12.7px;width:7.9px;height:13.7px;" viewBox="0 0 8 14" preserveAspectRatio="none"><path d="M2 0h3.800L4.400 4.400l3.600-.900L2.800 14h-.5l1.400-6.300-3.700 .900z" fill="#fff"/></svg><span class="mt" style="left:32.3px;transform:scaleX(0.963)">Energy Analysis</span><i class="arr"></i></div>
<div class="mi" style="top:602px"><svg style="position:absolute;left:14.7px;top:13.8px;width:13.3px;height:11.2px;" viewBox="0 0 13.500 11.200" preserveAspectRatio="none"><path d="M0 1.200h3V.2h2.200v1H13.500v1.200H5.200v1H3v-1H0zM0 5h8v-1h2.200v1h3.300v1.200h-3.300v1H8v-1H0zM0 8.800h4v-1h2.200v1h7.300V10H6.200v1H4v-1H0z" fill="#b4b4b4"/></svg><span class="mt" style="left:37.3px;transform:scaleX(0.969)">Capacity Planning</span></div>
<div class="mi" style="top:642px"><svg style="position:absolute;left:14.7px;top:12.8px;width:14.1px;height:13.3px;" viewBox="0 0 14 14" preserveAspectRatio="none"><path d="M13.800 3.300c.2.800.2 1.800-.3 2.700-.9 1.700-2.800 2.500-4.600 2l-5.700 5.600c-.6.600-1.700.600-2.300 0-.6-.6-.6-1.700 0-2.300l5.700-5.600c-.5-1.800.3-3.700 2-4.600.9-.5 1.900-.5 2.700-.3L8.900 3.200l.5 1.900 1.900.5z" fill="#b4b4b4"/><circle cx="2.100" cy="11.900" r=".75" fill="#3d3d3d"/></svg><span class="mt" style="left:38.2px;transform:scaleX(0.995)">Troubleshooting</span></div>
<div class="mi" style="top:682px"><svg style="position:absolute;left:14.7px;top:12.9px;width:16.9px;height:11.8px;" viewBox="0 0 17 12" preserveAspectRatio="none"><path d="M0 0h1.300v10.700H17V12H0zM2.800 8l3.500-3.600 2.300 2.100L12.300 2.800 11 1.500h4.400v4.300l-1.400-1.400-5.300 5.200-2.300-2.100-2.400 2.500z" fill="#b4b4b4"/></svg><span class="mt" style="left:41.1px;transform:scaleX(0.882)">KPI</span></div>
</div>
<div id="content">
 <div id="hdr"></div>
 <div id="bc">
  <svg class="abs" style="left:20.500px;top:11px" width="9.600" height="8.400" viewBox="0 0 11 10" preserveAspectRatio="none"><path d="M5.500 .5L0 5.200l.7.800L5.500 2l4.800 4 .7-.8L9 3.500V1H7.800v1.500zM5.500 3L1.800 6.100V9.500h2.700V6.800h2V9.500h2.700V6.100z" fill="#909090"/></svg>
  <span style="left:35px">Home</span>
  <span style="left:98px;color:#333;font-weight:bold">Energy Analysis</span>
  <span style="left:217px;letter-spacing:-0.080px">Period filter: 3J -</span>
  <span style="left:330px;letter-spacing:-0.080px">Selection filter: admin - preprod -</span>
  <svg class="abs" style="left:77px;top:11px" width="8" height="11"><path d="M1.500 1l5 4.500-5 4.500" fill="none" stroke="#666" stroke-width="1.200"/></svg>
  <svg class="abs" style="left:196px;top:11px" width="8" height="11"><path d="M1.500 1l5 4.500-5 4.500" fill="none" stroke="#666" stroke-width="1.200"/></svg>
  <svg class="abs" style="left:309px;top:11px" width="8" height="11"><path d="M1.500 1l5 4.500-5 4.500" fill="none" stroke="#666" stroke-width="1.200"/></svg>
 </div>
 <div id="outer"></div>
 <div id="panel">
  <div id="phead">
   <svg class="abs" style="left:11px;top:9px" width="16" height="13" viewBox="0 0 16 13"><path d="M0 0h1.200v11H16v1.200H0zM2.500 10V5.500L5.500 2l3 3 2.500-2 3.500 4v3z" fill="#555"/></svg>
   <i class="abs" style="left:37px;top:0;width:1px;height:31px;background:#d6d6d6"></i>
   <span class="abs" style="left:50px;top:0;line-height:36px;font-size:12px;font-weight:bold;color:#505050">Power Graph</span>
   <div id="ptools">
    <svg class="abs" style="left:61px;top:10px" width="13" height="12.500" viewBox="0 0 14 14" preserveAspectRatio="none"><path d="M5 0h4v4.500h2.800L7 9.300 2.200 4.500H5zM0 9.500h3.800L7 12l3.200-2.500H14V13.500H0zm10.500 2v1h1v-1zm1.700 0v1h1v-1z" fill="#2b2b2b" fill-rule="evenodd"/></svg>
    <svg class="abs" style="left:195px;top:10px;width:12.500px;height:13.500px;fill:#2b2b2b" viewBox="0 0 14 14" preserveAspectRatio="none"><path d="M13.800 3.300c.2.800.2 1.800-.3 2.700-.9 1.700-2.800 2.500-4.600 2l-5.700 5.600c-.6.600-1.700.600-2.300 0-.6-.6-.6-1.700 0-2.300l5.700-5.600c-.5-1.800.3-3.700 2-4.600.9-.5 1.900-.5 2.700-.3L8.900 3.200l.5 1.900 1.900.5z" fill="#2b2b2b"/><circle cx="2.100" cy="11.900" r=".75" fill="#dedede"/></svg>
   </div>
  </div>
  <div id="chart">
<svg class="hc" width="1309" height="476" viewBox="0 0 1309 476">
<g shape-rendering="auto"><polygon points="99.0,285.6 115.9,285.8 132.8,286.1 149.7,286.1 166.6,286.2 183.5,286.1 200.4,286.3 217.3,286.4 234.2,286.3 251.1,285.7 268.0,285.0 284.9,285.0 301.8,285.0 318.7,285.2 335.6,285.1 352.5,285.0 369.4,285.0 386.3,285.3 403.2,285.2 420.1,285.0 437.0,285.3 453.9,285.4 470.8,285.7 487.7,285.5 504.6,285.6 521.5,285.7 538.4,285.8 555.3,285.9 572.2,285.8 589.1,286.0 606.0,286.1 622.9,286.0 639.8,285.9 656.7,285.5 673.6,285.0 690.5,285.0 707.5,284.9 724.4,285.2 741.3,285.1 758.2,284.8 775.1,284.9 792.0,285.1 808.9,285.0 825.8,284.7 842.7,284.9 859.6,285.1 876.5,285.5 893.4,285.5 910.3,285.6 927.2,285.7 944.1,285.8 961.0,285.9 977.9,285.9 994.8,285.9 1011.7,286.1 1028.6,286.0 1045.5,286.1 1062.4,285.7 1079.3,285.1 1096.2,285.0 1113.1,284.9 1130.0,284.7 1146.9,284.9 1163.8,284.4 1180.7,284.6 1197.6,284.9 1214.5,285.2 1231.4,284.9 1248.3,285.2 1265.2,285.3 1282.1,285.2 1299.0,285.0 1299.0,297.0 1282.1,297.0 1265.2,297.0 1248.3,297.0 1231.4,297.0 1214.5,297.0 1197.6,297.0 1180.7,297.0 1163.8,297.0 1146.9,297.0 1130.0,297.0 1113.1,297.0 1096.2,297.0 1079.3,297.0 1062.4,297.0 1045.5,297.0 1028.6,297.0 1011.7,297.0 994.8,297.0 977.9,297.0 961.0,297.0 944.1,297.0 927.2,297.0 910.3,297.0 893.4,297.0 876.5,297.0 859.6,297.0 842.7,297.0 825.8,297.0 808.9,297.0 792.0,297.0 775.1,297.0 758.2,297.0 741.3,297.0 724.4,297.0 707.5,297.0 690.5,297.0 673.6,297.0 656.7,297.0 639.8,297.0 622.9,297.0 606.0,297.0 589.1,297.0 572.2,297.0 555.3,297.0 538.4,297.0 521.5,297.0 504.6,297.0 487.7,297.0 470.8,297.0 453.9,297.0 437.0,297.0 420.1,297.0 403.2,297.0 386.3,297.0 369.4,297.0 352.5,297.0 335.6,297.0 318.7,297.0 301.8,297.0 284.9,297.0 268.0,297.0 251.1,297.0 234.2,297.0 217.3,297.0 200.4,297.0 183.5,297.0 166.6,297.0 149.7,297.0 132.8,297.0 115.9,297.0 99.0,297.0" fill="#a0a3ef"/><polygon points="99.0,272.9 115.9,273.2 132.8,273.9 149.7,274.0 166.6,274.0 183.5,273.8 200.4,274.3 217.3,274.5 234.2,274.2 251.1,273.0 268.0,271.5 284.9,271.5 301.8,271.6 318.7,272.0 335.6,271.8 352.5,271.6 369.4,271.5 386.3,272.1 403.2,272.0 420.1,271.6 437.0,272.1 453.9,272.5 470.8,273.1 487.7,272.7 504.6,272.8 521.5,273.0 538.4,273.3 555.3,273.4 572.2,273.3 589.1,273.6 606.0,273.8 622.9,273.6 639.8,273.3 656.7,272.7 673.6,271.6 690.5,271.5 707.5,271.4 724.4,271.9 741.3,271.7 758.2,271.0 775.1,271.3 792.0,271.7 808.9,271.5 825.8,271.0 842.7,271.3 859.6,271.8 876.5,272.7 893.4,272.7 910.3,272.8 927.2,273.0 944.1,273.2 961.0,273.4 977.9,273.5 994.8,273.5 1011.7,273.9 1028.6,273.6 1045.5,273.8 1062.4,273.0 1079.3,271.8 1096.2,271.5 1113.1,271.2 1130.0,271.0 1146.9,271.3 1163.8,270.2 1180.7,270.7 1197.6,271.3 1214.5,272.0 1231.4,271.3 1248.3,272.0 1265.2,272.2 1282.1,272.0 1299.0,271.5 1299.0,285.0 1282.1,285.2 1265.2,285.3 1248.3,285.2 1231.4,284.9 1214.5,285.2 1197.6,284.9 1180.7,284.6 1163.8,284.4 1146.9,284.9 1130.0,284.7 1113.1,284.9 1096.2,285.0 1079.3,285.1 1062.4,285.7 1045.5,286.1 1028.6,286.0 1011.7,286.1 994.8,285.9 977.9,285.9 961.0,285.9 944.1,285.8 927.2,285.7 910.3,285.6 893.4,285.5 876.5,285.5 859.6,285.1 842.7,284.9 825.8,284.7 808.9,285.0 792.0,285.1 775.1,284.9 758.2,284.8 741.3,285.1 724.4,285.2 707.5,284.9 690.5,285.0 673.6,285.0 656.7,285.5 639.8,285.9 622.9,286.0 606.0,286.1 589.1,286.0 572.2,285.8 555.3,285.9 538.4,285.8 521.5,285.7 504.6,285.6 487.7,285.5 470.8,285.7 453.9,285.4 437.0,285.3 420.1,285.0 403.2,285.2 386.3,285.3 369.4,285.0 352.5,285.0 335.6,285.1 318.7,285.2 301.8,285.0 284.9,285.0 268.0,285.0 251.1,285.7 234.2,286.3 217.3,286.4 200.4,286.3 183.5,286.1 166.6,286.2 149.7,286.1 132.8,286.1 115.9,285.8 99.0,285.6" fill="#f9ba85"/><polygon points="99.0,258.5 115.9,258.9 132.8,260.1 149.7,260.2 166.6,260.3 183.5,260.0 200.4,260.7 217.3,261.1 234.2,260.6 251.1,258.7 268.0,256.3 284.9,256.2 301.8,256.4 318.7,257.0 335.6,256.7 352.5,256.4 369.4,256.3 386.3,257.2 403.2,257.2 420.1,256.4 437.0,257.2 453.9,257.9 470.8,258.8 487.7,258.2 504.6,258.3 521.5,258.7 538.4,259.1 555.3,259.3 572.2,259.1 589.1,259.6 606.0,259.9 622.9,259.6 639.8,259.2 656.7,258.2 673.6,256.4 690.5,256.2 707.5,256.1 724.4,256.9 741.3,256.5 758.2,255.6 775.1,255.9 792.0,256.5 808.9,256.3 825.8,255.5 842.7,256.0 859.6,256.7 876.5,258.2 893.4,258.2 910.3,258.3 927.2,258.7 944.1,258.9 961.0,259.3 977.9,259.6 994.8,259.4 1011.7,260.1 1028.6,259.6 1045.5,259.9 1062.4,258.7 1079.3,256.7 1096.2,256.2 1113.1,255.8 1130.0,255.5 1146.9,255.9 1163.8,254.3 1180.7,255.1 1197.6,256.0 1214.5,257.0 1231.4,256.0 1248.3,257.0 1265.2,257.5 1282.1,257.0 1299.0,256.2 1299.0,271.5 1282.1,272.0 1265.2,272.2 1248.3,272.0 1231.4,271.3 1214.5,272.0 1197.6,271.3 1180.7,270.7 1163.8,270.2 1146.9,271.3 1130.0,271.0 1113.1,271.2 1096.2,271.5 1079.3,271.8 1062.4,273.0 1045.5,273.8 1028.6,273.6 1011.7,273.9 994.8,273.5 977.9,273.5 961.0,273.4 944.1,273.2 927.2,273.0 910.3,272.8 893.4,272.7 876.5,272.7 859.6,271.8 842.7,271.3 825.8,271.0 808.9,271.5 792.0,271.7 775.1,271.3 758.2,271.0 741.3,271.7 724.4,271.9 707.5,271.4 690.5,271.5 673.6,271.6 656.7,272.7 639.8,273.3 622.9,273.6 606.0,273.8 589.1,273.6 572.2,273.3 555.3,273.4 538.4,273.3 521.5,273.0 504.6,272.8 487.7,272.7 470.8,273.1 453.9,272.5 437.0,272.1 420.1,271.6 403.2,272.0 386.3,272.1 369.4,271.5 352.5,271.6 335.6,271.8 318.7,272.0 301.8,271.6 284.9,271.5 268.0,271.5 251.1,273.0 234.2,274.2 217.3,274.5 200.4,274.3 183.5,273.8 166.6,274.0 149.7,274.0 132.8,273.9 115.9,273.2 99.0,272.9" fill="#acf29e"/><polygon points="99.0,245.2 115.9,245.9 132.8,247.4 149.7,247.6 166.6,247.7 183.5,247.3 200.4,248.2 217.3,248.8 234.2,248.1 251.1,245.5 268.0,242.3 284.9,242.2 301.8,242.5 318.7,243.3 335.6,242.9 352.5,242.5 369.4,242.3 386.3,243.5 403.2,243.4 420.1,242.5 437.0,243.5 453.9,244.4 470.8,245.7 487.7,244.8 504.6,245.0 521.5,245.5 538.4,246.1 555.3,246.4 572.2,246.1 589.1,246.8 606.0,247.2 622.9,246.8 639.8,246.2 656.7,244.8 673.6,242.5 690.5,242.2 707.5,242.1 724.4,243.1 741.3,242.6 758.2,241.3 775.1,241.8 792.0,242.6 808.9,242.3 825.8,241.2 842.7,241.9 859.6,242.9 876.5,244.8 893.4,244.8 910.3,245.0 927.2,245.5 944.1,245.9 961.0,246.4 977.9,246.7 994.8,246.5 1011.7,247.4 1028.6,246.8 1045.5,247.2 1062.4,245.5 1079.3,242.9 1096.2,242.2 1113.1,241.7 1130.0,241.2 1146.9,241.8 1163.8,239.6 1180.7,240.7 1197.6,241.9 1214.5,243.3 1231.4,241.9 1248.3,243.3 1265.2,243.9 1282.1,243.3 1299.0,242.2 1299.0,256.2 1282.1,257.0 1265.2,257.5 1248.3,257.0 1231.4,256.0 1214.5,257.0 1197.6,256.0 1180.7,255.1 1163.8,254.3 1146.9,255.9 1130.0,255.5 1113.1,255.8 1096.2,256.2 1079.3,256.7 1062.4,258.7 1045.5,259.9 1028.6,259.6 1011.7,260.1 994.8,259.4 977.9,259.6 961.0,259.3 944.1,258.9 927.2,258.7 910.3,258.3 893.4,258.2 876.5,258.2 859.6,256.7 842.7,256.0 825.8,255.5 808.9,256.3 792.0,256.5 775.1,255.9 758.2,255.6 741.3,256.5 724.4,256.9 707.5,256.1 690.5,256.2 673.6,256.4 656.7,258.2 639.8,259.2 622.9,259.6 606.0,259.9 589.1,259.6 572.2,259.1 555.3,259.3 538.4,259.1 521.5,258.7 504.6,258.3 487.7,258.2 470.8,258.8 453.9,257.9 437.0,257.2 420.1,256.4 403.2,257.2 386.3,257.2 369.4,256.3 352.5,256.4 335.6,256.7 318.7,257.0 301.8,256.4 284.9,256.2 268.0,256.3 251.1,258.7 234.2,260.6 217.3,261.1 200.4,260.7 183.5,260.0 166.6,260.3 149.7,260.2 132.8,260.1 115.9,258.9 99.0,258.5" fill="#727276"/><polygon points="99.0,231.3 115.9,232.1 132.8,234.1 149.7,234.3 166.6,234.4 183.5,234.0 200.4,235.1 217.3,235.8 234.2,234.9 251.1,231.6 268.0,227.6 284.9,227.5 301.8,227.9 318.7,228.8 335.6,228.3 352.5,227.9 369.4,227.6 386.3,229.1 403.2,229.1 420.1,227.9 437.0,229.1 453.9,230.3 470.8,232.0 487.7,230.8 504.6,231.0 521.5,231.6 538.4,232.4 555.3,232.8 572.2,232.4 589.1,233.3 606.0,233.8 622.9,233.3 639.8,232.6 656.7,230.8 673.6,227.9 690.5,227.5 707.5,227.3 724.4,228.7 741.3,228.0 758.2,226.3 775.1,227.0 792.0,228.0 808.9,227.6 825.8,226.2 842.7,227.1 859.6,228.3 876.5,230.8 893.4,230.8 910.3,231.0 927.2,231.6 944.1,232.1 961.0,232.8 977.9,233.2 994.8,232.9 1011.7,234.1 1028.6,233.3 1045.5,233.8 1062.4,231.6 1079.3,228.3 1096.2,227.5 1113.1,226.8 1130.0,226.2 1146.9,227.0 1163.8,224.2 1180.7,225.5 1197.6,227.1 1214.5,228.8 1231.4,227.1 1248.3,228.8 1265.2,229.6 1282.1,228.8 1299.0,227.5 1299.0,242.2 1282.1,243.3 1265.2,243.9 1248.3,243.3 1231.4,241.9 1214.5,243.3 1197.6,241.9 1180.7,240.7 1163.8,239.6 1146.9,241.8 1130.0,241.2 1113.1,241.7 1096.2,242.2 1079.3,242.9 1062.4,245.5 1045.5,247.2 1028.6,246.8 1011.7,247.4 994.8,246.5 977.9,246.7 961.0,246.4 944.1,245.9 927.2,245.5 910.3,245.0 893.4,244.8 876.5,244.8 859.6,242.9 842.7,241.9 825.8,241.2 808.9,242.3 792.0,242.6 775.1,241.8 758.2,241.3 741.3,242.6 724.4,243.1 707.5,242.1 690.5,242.2 673.6,242.5 656.7,244.8 639.8,246.2 622.9,246.8 606.0,247.2 589.1,246.8 572.2,246.1 555.3,246.4 538.4,246.1 521.5,245.5 504.6,245.0 487.7,244.8 470.8,245.7 453.9,244.4 437.0,243.5 420.1,242.5 403.2,243.4 386.3,243.5 369.4,242.3 352.5,242.5 335.6,242.9 318.7,243.3 301.8,242.5 284.9,242.2 268.0,242.3 251.1,245.5 234.2,248.1 217.3,248.8 200.4,248.2 183.5,247.3 166.6,247.7 149.7,247.6 132.8,247.4 115.9,245.9 99.0,245.2" fill="#9dc8f1"/><polygon points="99.0,215.2 115.9,216.2 132.8,218.7 149.7,218.9 166.6,219.1 183.5,218.5 200.4,219.9 217.3,220.8 234.2,219.7 251.1,215.6 268.0,210.6 284.9,210.4 301.8,210.9 318.7,212.1 335.6,211.5 352.5,210.9 369.4,210.6 386.3,212.5 403.2,212.4 420.1,210.9 437.0,212.5 453.9,213.9 470.8,216.0 487.7,214.6 504.6,214.8 521.5,215.6 538.4,216.6 555.3,217.0 572.2,216.6 589.1,217.7 606.0,218.3 622.9,217.7 639.8,216.8 656.7,214.6 673.6,210.9 690.5,210.4 707.5,210.2 724.4,211.9 741.3,211.1 758.2,209.0 775.1,209.8 792.0,211.1 808.9,210.6 825.8,208.8 842.7,210.0 859.6,211.5 876.5,214.6 893.4,214.6 910.3,214.8 927.2,215.6 944.1,216.2 961.0,217.0 977.9,217.5 994.8,217.2 1011.7,218.7 1028.6,217.7 1045.5,218.3 1062.4,215.6 1079.3,211.5 1096.2,210.4 1113.1,209.6 1130.0,208.8 1146.9,209.8 1163.8,206.3 1180.7,208.0 1197.6,210.0 1214.5,212.1 1231.4,210.0 1248.3,212.1 1265.2,213.1 1282.1,212.1 1299.0,210.4 1299.0,227.5 1282.1,228.8 1265.2,229.6 1248.3,228.8 1231.4,227.1 1214.5,228.8 1197.6,227.1 1180.7,225.5 1163.8,224.2 1146.9,227.0 1130.0,226.2 1113.1,226.8 1096.2,227.5 1079.3,228.3 1062.4,231.6 1045.5,233.8 1028.6,233.3 1011.7,234.1 994.8,232.9 977.9,233.2 961.0,232.8 944.1,232.1 927.2,231.6 910.3,231.0 893.4,230.8 876.5,230.8 859.6,228.3 842.7,227.1 825.8,226.2 808.9,227.6 792.0,228.0 775.1,227.0 758.2,226.3 741.3,228.0 724.4,228.7 707.5,227.3 690.5,227.5 673.6,227.9 656.7,230.8 639.8,232.6 622.9,233.3 606.0,233.8 589.1,233.3 572.2,232.4 555.3,232.8 538.4,232.4 521.5,231.6 504.6,231.0 487.7,230.8 470.8,232.0 453.9,230.3 437.0,229.1 420.1,227.9 403.2,229.1 386.3,229.1 369.4,227.6 352.5,227.9 335.6,228.3 318.7,228.8 301.8,227.9 284.9,227.5 268.0,227.6 251.1,231.6 234.2,234.9 217.3,235.8 200.4,235.1 183.5,234.0 166.6,234.4 149.7,234.3 132.8,234.1 115.9,232.1 99.0,231.3" fill="#adeee9"/><polygon points="284.9,200.5 301.8,201.1 318.7,202.2 335.6,201.6 352.5,201.0 369.4,200.8 369.4,210.6 352.5,210.9 335.6,211.5 318.7,212.1 301.8,210.9 284.9,210.4" fill="#f5859f"/><polygon points="284.9,189.8 301.8,190.5 318.7,191.5 335.6,190.9 352.5,190.3 369.4,190.1 369.4,200.8 352.5,201.0 335.6,201.6 318.7,202.2 301.8,201.1 284.9,200.5" fill="#a0a3ef"/><polygon points="284.9,178.5 301.8,179.2 318.7,180.2 335.6,179.6 352.5,179.0 369.4,178.8 369.4,190.1 352.5,190.3 335.6,190.9 318.7,191.5 301.8,190.5 284.9,189.8" fill="#f9ba85"/><polygon points="284.9,167.7 301.8,168.6 318.7,169.5 335.6,168.9 352.5,168.3 369.4,168.1 369.4,178.8 352.5,179.0 335.6,179.6 318.7,180.2 301.8,179.2 284.9,178.5" fill="#acf29e"/><polygon points="284.9,156.2 301.8,157.1 318.7,158.0 335.6,157.4 352.5,156.8 369.4,156.7 369.4,168.1 352.5,168.3 335.6,168.9 318.7,169.5 301.8,168.6 284.9,167.7" fill="#727276"/><polygon points="284.9,145.9 301.8,146.9 318.7,147.7 335.6,147.1 352.5,146.5 369.4,146.4 369.4,156.7 352.5,156.8 335.6,157.4 318.7,158.0 301.8,157.1 284.9,156.2" fill="#9dc8f1"/><polygon points="369.4,201.5 386.3,203.4 403.2,203.4 420.1,201.8 437.0,203.5 453.9,204.9 470.8,207.1 487.7,205.5 504.6,205.8 521.5,206.6 538.4,207.6 555.3,208.0 572.2,207.6 589.1,208.7 606.0,209.4 622.9,208.8 639.8,207.9 656.7,205.8 673.6,201.9 690.5,201.4 707.5,201.2 724.4,202.9 741.3,202.1 758.2,200.0 775.1,200.8 792.0,202.1 808.9,201.6 825.8,199.7 842.7,200.9 859.6,202.5 876.5,205.7 893.4,205.5 910.3,205.8 927.2,206.6 944.1,207.2 961.0,208.0 977.9,208.5 994.8,208.2 1011.7,209.8 1028.6,208.8 1045.5,209.4 1062.4,206.7 1079.3,202.5 1096.2,201.4 1113.1,200.6 1130.0,199.8 1146.9,200.9 1163.8,197.4 1180.7,199.1 1197.6,201.0 1214.5,203.1 1231.4,200.8 1248.3,203.0 1265.2,204.1 1282.1,203.1 1299.0,201.3 1299.0,210.4 1282.1,212.1 1265.2,213.1 1248.3,212.1 1231.4,210.0 1214.5,212.1 1197.6,210.0 1180.7,208.0 1163.8,206.3 1146.9,209.8 1130.0,208.8 1113.1,209.6 1096.2,210.4 1079.3,211.5 1062.4,215.6 1045.5,218.3 1028.6,217.7 1011.7,218.7 994.8,217.2 977.9,217.5 961.0,217.0 944.1,216.2 927.2,215.6 910.3,214.8 893.4,214.6 876.5,214.6 859.6,211.5 842.7,210.0 825.8,208.8 808.9,210.6 792.0,211.1 775.1,209.8 758.2,209.0 741.3,211.1 724.4,211.9 707.5,210.2 690.5,210.4 673.6,210.9 656.7,214.6 639.8,216.8 622.9,217.7 606.0,218.3 589.1,217.7 572.2,216.6 555.3,217.0 538.4,216.6 521.5,215.6 504.6,214.8 487.7,214.6 470.8,216.0 453.9,213.9 437.0,212.5 420.1,210.9 403.2,212.4 386.3,212.5 369.4,210.6" fill="#f78484"/><polygon points="369.4,192.5 386.3,194.3 403.2,194.5 420.1,192.7 437.0,194.5 453.9,195.8 470.8,198.1 487.7,196.4 504.6,196.9 521.5,197.6 538.4,198.6 555.3,199.0 572.2,198.7 589.1,199.8 606.0,200.5 622.9,199.9 639.8,199.1 656.7,196.9 673.6,192.9 690.5,192.5 707.5,192.2 724.4,193.8 741.3,193.1 758.2,191.0 775.1,191.7 792.0,193.0 808.9,192.6 825.8,190.6 842.7,191.9 859.6,193.5 876.5,196.8 893.4,196.5 910.3,196.8 927.2,197.6 944.1,198.2 961.0,199.0 977.9,199.4 994.8,199.2 1011.7,200.8 1028.6,199.9 1045.5,200.5 1062.4,197.7 1079.3,193.6 1096.2,192.5 1113.1,191.6 1130.0,190.8 1146.9,191.9 1163.8,188.5 1180.7,190.1 1197.6,192.0 1214.5,194.1 1231.4,191.7 1248.3,194.0 1265.2,195.2 1282.1,194.1 1299.0,192.1 1299.0,201.3 1282.1,203.1 1265.2,204.1 1248.3,203.0 1231.4,200.8 1214.5,203.1 1197.6,201.0 1180.7,199.1 1163.8,197.4 1146.9,200.9 1130.0,199.8 1113.1,200.6 1096.2,201.4 1079.3,202.5 1062.4,206.7 1045.5,209.4 1028.6,208.8 1011.7,209.8 994.8,208.2 977.9,208.5 961.0,208.0 944.1,207.2 927.2,206.6 910.3,205.8 893.4,205.5 876.5,205.7 859.6,202.5 842.7,200.9 825.8,199.7 808.9,201.6 792.0,202.1 775.1,200.8 758.2,200.0 741.3,202.1 724.4,202.9 707.5,201.2 690.5,201.4 673.6,201.9 656.7,205.8 639.8,207.9 622.9,208.8 606.0,209.4 589.1,208.7 572.2,207.6 555.3,208.0 538.4,207.6 521.5,206.6 504.6,205.8 487.7,205.5 470.8,207.1 453.9,204.9 437.0,203.5 420.1,201.8 403.2,203.4 386.3,203.4 369.4,201.5" fill="#60acab"/><polygon points="369.4,183.1 386.3,184.8 403.2,185.2 420.1,183.2 437.0,185.1 453.9,186.4 470.8,188.8 487.7,186.9 504.6,187.6 521.5,188.2 538.4,189.2 555.3,189.7 572.2,189.4 589.1,190.5 606.0,191.2 622.9,190.7 639.8,189.8 656.7,187.7 673.6,183.6 690.5,183.2 707.5,182.8 724.4,184.4 741.3,183.7 758.2,181.6 775.1,182.3 792.0,183.6 808.9,183.2 825.8,181.1 842.7,182.5 859.6,184.1 876.5,187.5 893.4,187.0 910.3,187.4 927.2,188.2 944.1,188.9 961.0,189.6 977.9,190.1 994.8,189.9 1011.7,191.5 1028.6,190.7 1045.5,191.3 1062.4,188.4 1079.3,184.3 1096.2,183.2 1113.1,182.3 1130.0,181.5 1146.9,182.6 1163.8,179.3 1180.7,180.8 1197.6,182.6 1214.5,184.7 1231.4,182.2 1248.3,184.6 1265.2,185.9 1282.1,184.7 1299.0,182.6 1299.0,192.1 1282.1,194.1 1265.2,195.2 1248.3,194.0 1231.4,191.7 1214.5,194.1 1197.6,192.0 1180.7,190.1 1163.8,188.5 1146.9,191.9 1130.0,190.8 1113.1,191.6 1096.2,192.5 1079.3,193.6 1062.4,197.7 1045.5,200.5 1028.6,199.9 1011.7,200.8 994.8,199.2 977.9,199.4 961.0,199.0 944.1,198.2 927.2,197.6 910.3,196.8 893.4,196.5 876.5,196.8 859.6,193.5 842.7,191.9 825.8,190.6 808.9,192.6 792.0,193.0 775.1,191.7 758.2,191.0 741.3,193.1 724.4,193.8 707.5,192.2 690.5,192.5 673.6,192.9 656.7,196.9 639.8,199.1 622.9,199.9 606.0,200.5 589.1,199.8 572.2,198.7 555.3,199.0 538.4,198.6 521.5,197.6 504.6,196.9 487.7,196.4 470.8,198.1 453.9,195.8 437.0,194.5 420.1,192.7 403.2,194.5 386.3,194.3 369.4,192.5" fill="#ebde7f"/><polygon points="369.4,172.2 386.3,173.9 403.2,174.4 420.1,172.3 437.0,174.3 453.9,175.5 470.8,178.1 487.7,176.0 504.6,176.8 521.5,177.4 538.4,178.4 555.3,178.9 572.2,178.6 589.1,179.7 606.0,180.5 622.9,180.0 639.8,179.2 656.7,177.1 673.6,172.8 690.5,172.4 707.5,172.0 724.4,173.5 741.3,172.9 758.2,170.7 775.1,171.4 792.0,172.7 808.9,172.4 825.8,170.2 842.7,171.6 859.6,173.3 876.5,176.8 893.4,176.1 910.3,176.5 927.2,177.4 944.1,178.1 961.0,178.8 977.9,179.2 994.8,179.1 1011.7,180.8 1028.6,180.0 1045.5,180.6 1062.4,177.7 1079.3,173.5 1096.2,172.4 1113.1,171.5 1130.0,170.7 1146.9,171.9 1163.8,168.6 1180.7,170.1 1197.6,171.7 1214.5,173.8 1231.4,171.1 1248.3,173.7 1265.2,175.1 1282.1,173.8 1299.0,171.6 1299.0,182.6 1282.1,184.7 1265.2,185.9 1248.3,184.6 1231.4,182.2 1214.5,184.7 1197.6,182.6 1180.7,180.8 1163.8,179.3 1146.9,182.6 1130.0,181.5 1113.1,182.3 1096.2,183.2 1079.3,184.3 1062.4,188.4 1045.5,191.3 1028.6,190.7 1011.7,191.5 994.8,189.9 977.9,190.1 961.0,189.6 944.1,188.9 927.2,188.2 910.3,187.4 893.4,187.0 876.5,187.5 859.6,184.1 842.7,182.5 825.8,181.1 808.9,183.2 792.0,183.6 775.1,182.3 758.2,181.6 741.3,183.7 724.4,184.4 707.5,182.8 690.5,183.2 673.6,183.6 656.7,187.7 639.8,189.8 622.9,190.7 606.0,191.2 589.1,190.5 572.2,189.4 555.3,189.7 538.4,189.2 521.5,188.2 504.6,187.6 487.7,186.9 470.8,188.8 453.9,186.4 437.0,185.1 420.1,183.2 403.2,185.2 386.3,184.8 369.4,183.1" fill="#f5859f"/><polygon points="369.4,162.1 386.3,163.8 403.2,164.4 420.1,162.1 437.0,164.3 453.9,165.5 470.8,168.1 487.7,165.8 504.6,166.8 521.5,167.4 538.4,168.4 555.3,168.9 572.2,168.6 589.1,169.7 606.0,170.6 622.9,170.1 639.8,169.3 656.7,167.2 673.6,162.8 690.5,162.4 707.5,162.0 724.4,163.5 741.3,162.9 758.2,160.7 775.1,161.4 792.0,162.6 808.9,162.4 825.8,160.0 842.7,161.5 859.6,163.3 876.5,166.9 893.4,166.0 910.3,166.5 927.2,167.4 944.1,168.1 961.0,168.8 977.9,169.1 994.8,169.1 1011.7,170.8 1028.6,170.1 1045.5,170.7 1062.4,167.7 1079.3,163.5 1096.2,162.4 1113.1,161.5 1130.0,160.7 1146.9,161.9 1163.8,158.7 1180.7,160.1 1197.6,161.7 1214.5,163.8 1231.4,161.0 1248.3,163.6 1265.2,165.1 1282.1,163.8 1299.0,161.5 1299.0,171.6 1282.1,173.8 1265.2,175.1 1248.3,173.7 1231.4,171.1 1214.5,173.8 1197.6,171.7 1180.7,170.1 1163.8,168.6 1146.9,171.9 1130.0,170.7 1113.1,171.5 1096.2,172.4 1079.3,173.5 1062.4,177.7 1045.5,180.6 1028.6,180.0 1011.7,180.8 994.8,179.1 977.9,179.2 961.0,178.8 944.1,178.1 927.2,177.4 910.3,176.5 893.4,176.1 876.5,176.8 859.6,173.3 842.7,171.6 825.8,170.2 808.9,172.4 792.0,172.7 775.1,171.4 758.2,170.7 741.3,172.9 724.4,173.5 707.5,172.0 690.5,172.4 673.6,172.8 656.7,177.1 639.8,179.2 622.9,180.0 606.0,180.5 589.1,179.7 572.2,178.6 555.3,178.9 538.4,178.4 521.5,177.4 504.6,176.8 487.7,176.0 470.8,178.1 453.9,175.5 437.0,174.3 420.1,172.3 403.2,174.4 386.3,173.9 369.4,172.2" fill="#a0a3ef"/><polygon points="369.4,150.5 386.3,152.2 403.2,153.0 420.1,150.5 437.0,152.8 453.9,154.0 470.8,156.7 487.7,154.2 504.6,155.4 521.5,155.9 538.4,156.9 555.3,157.5 572.2,157.2 589.1,158.3 606.0,159.3 622.9,158.8 639.8,158.0 656.7,156.0 673.6,151.4 690.5,151.0 707.5,150.5 724.4,152.0 741.3,151.4 758.2,149.2 775.1,149.9 792.0,151.1 808.9,150.9 825.8,148.4 842.7,149.9 859.6,151.8 876.5,155.6 893.4,154.5 910.3,155.0 927.2,155.9 944.1,156.7 961.0,157.3 977.9,157.6 994.8,157.7 1011.7,159.4 1028.6,158.8 1045.5,159.4 1062.4,156.3 1079.3,152.1 1096.2,151.0 1113.1,150.1 1130.0,149.3 1146.9,150.5 1163.8,147.4 1180.7,148.7 1197.6,150.2 1214.5,152.3 1231.4,149.3 1248.3,152.0 1265.2,153.7 1282.1,152.3 1299.0,149.8 1299.0,161.5 1282.1,163.8 1265.2,165.1 1248.3,163.6 1231.4,161.0 1214.5,163.8 1197.6,161.7 1180.7,160.1 1163.8,158.7 1146.9,161.9 1130.0,160.7 1113.1,161.5 1096.2,162.4 1079.3,163.5 1062.4,167.7 1045.5,170.7 1028.6,170.1 1011.7,170.8 994.8,169.1 977.9,169.1 961.0,168.8 944.1,168.1 927.2,167.4 910.3,166.5 893.4,166.0 876.5,166.9 859.6,163.3 842.7,161.5 825.8,160.0 808.9,162.4 792.0,162.6 775.1,161.4 758.2,160.7 741.3,162.9 724.4,163.5 707.5,162.0 690.5,162.4 673.6,162.8 656.7,167.2 639.8,169.3 622.9,170.1 606.0,170.6 589.1,169.7 572.2,168.6 555.3,168.9 538.4,168.4 521.5,167.4 504.6,166.8 487.7,165.8 470.8,168.1 453.9,165.5 437.0,164.3 420.1,162.1 403.2,164.4 386.3,163.8 369.4,162.1" fill="#f9ba85"/><polygon points="369.4,139.6 386.3,141.2 403.2,142.2 420.1,139.6 437.0,142.0 453.9,143.1 470.8,146.0 487.7,143.3 504.6,144.6 521.5,145.1 538.4,146.1 555.3,146.7 572.2,146.4 589.1,147.5 606.0,148.6 622.9,148.1 639.8,147.3 656.7,145.3 673.6,140.6 690.5,140.2 707.5,139.7 724.4,141.1 741.3,140.6 758.2,138.3 775.1,139.0 792.0,140.2 808.9,140.1 825.8,137.5 842.7,139.0 859.6,141.0 876.5,144.9 893.4,143.6 910.3,144.1 927.2,145.1 944.1,145.9 961.0,146.5 977.9,146.8 994.8,146.9 1011.7,148.7 1028.6,148.1 1045.5,148.7 1062.4,145.6 1079.3,141.3 1096.2,140.2 1113.1,139.3 1130.0,138.5 1146.9,139.8 1163.8,136.7 1180.7,138.0 1197.6,139.3 1214.5,141.4 1231.4,138.3 1248.3,141.1 1265.2,142.9 1282.1,141.4 1299.0,138.8 1299.0,149.8 1282.1,152.3 1265.2,153.7 1248.3,152.0 1231.4,149.3 1214.5,152.3 1197.6,150.2 1180.7,148.7 1163.8,147.4 1146.9,150.5 1130.0,149.3 1113.1,150.1 1096.2,151.0 1079.3,152.1 1062.4,156.3 1045.5,159.4 1028.6,158.8 1011.7,159.4 994.8,157.7 977.9,157.6 961.0,157.3 944.1,156.7 927.2,155.9 910.3,155.0 893.4,154.5 876.5,155.6 859.6,151.8 842.7,149.9 825.8,148.4 808.9,150.9 792.0,151.1 775.1,149.9 758.2,149.2 741.3,151.4 724.4,152.0 707.5,150.5 690.5,151.0 673.6,151.4 656.7,156.0 639.8,158.0 622.9,158.8 606.0,159.3 589.1,158.3 572.2,157.2 555.3,157.5 538.4,156.9 521.5,155.9 504.6,155.4 487.7,154.2 470.8,156.7 453.9,154.0 437.0,152.8 420.1,150.5 403.2,153.0 386.3,152.2 369.4,150.5" fill="#acf29e"/><polygon points="369.4,127.4 386.3,129.0 403.2,130.1 420.1,127.3 437.0,129.9 453.9,130.9 470.8,133.9 487.7,131.0 504.6,132.5 521.5,133.0 538.4,134.0 555.3,134.6 572.2,134.3 589.1,135.4 606.0,136.6 622.9,136.2 639.8,135.4 656.7,133.4 673.6,128.5 690.5,128.1 707.5,127.6 724.4,128.9 741.3,128.5 758.2,126.2 775.1,126.8 792.0,128.0 808.9,128.0 825.8,125.2 842.7,126.8 859.6,128.9 876.5,132.9 893.4,131.4 910.3,132.0 927.2,133.0 944.1,133.8 961.0,134.4 977.9,134.6 994.8,134.8 1011.7,136.6 1028.6,136.2 1045.5,136.8 1062.4,133.5 1079.3,129.2 1096.2,128.1 1113.1,127.2 1130.0,126.4 1146.9,127.7 1163.8,124.8 1180.7,125.9 1197.6,127.2 1214.5,129.3 1231.4,125.9 1248.3,128.9 1265.2,130.8 1282.1,129.3 1299.0,126.5 1299.0,138.8 1282.1,141.4 1265.2,142.9 1248.3,141.1 1231.4,138.3 1214.5,141.4 1197.6,139.3 1180.7,138.0 1163.8,136.7 1146.9,139.8 1130.0,138.5 1113.1,139.3 1096.2,140.2 1079.3,141.3 1062.4,145.6 1045.5,148.7 1028.6,148.1 1011.7,148.7 994.8,146.9 977.9,146.8 961.0,146.5 944.1,145.9 927.2,145.1 910.3,144.1 893.4,143.6 876.5,144.9 859.6,141.0 842.7,139.0 825.8,137.5 808.9,140.1 792.0,140.2 775.1,139.0 758.2,138.3 741.3,140.6 724.4,141.1 707.5,139.7 690.5,140.2 673.6,140.6 656.7,145.3 639.8,147.3 622.9,148.1 606.0,148.6 589.1,147.5 572.2,146.4 555.3,146.7 538.4,146.1 521.5,145.1 504.6,144.6 487.7,143.3 470.8,146.0 453.9,143.1 437.0,142.0 420.1,139.6 403.2,142.2 386.3,141.2 369.4,139.6" fill="#727276"/><polygon points="369.4,118.2 386.3,119.7 403.2,121.0 420.1,118.0 437.0,120.7 453.9,121.7 470.8,124.8 487.7,121.7 504.6,123.4 521.5,123.8 538.4,124.8 555.3,125.4 572.2,125.2 589.1,126.3 606.0,127.5 622.9,127.1 639.8,126.3 656.7,124.4 673.6,119.3 690.5,119.0 707.5,118.4 724.4,119.7 741.3,119.3 758.2,117.0 775.1,117.6 792.0,118.8 808.9,118.8 825.8,115.9 842.7,117.6 859.6,119.7 876.5,123.8 893.4,122.1 910.3,122.8 927.2,123.8 944.1,124.6 961.0,125.2 977.9,125.4 994.8,125.6 1011.7,127.5 1028.6,127.1 1045.5,127.7 1062.4,124.4 1079.3,120.1 1096.2,119.0 1113.1,118.0 1130.0,117.2 1146.9,118.6 1163.8,115.7 1180.7,116.8 1197.6,118.0 1214.5,120.1 1231.4,116.6 1248.3,119.7 1265.2,121.7 1282.1,120.1 1299.0,117.2 1299.0,126.5 1282.1,129.3 1265.2,130.8 1248.3,128.9 1231.4,125.9 1214.5,129.3 1197.6,127.2 1180.7,125.9 1163.8,124.8 1146.9,127.7 1130.0,126.4 1113.1,127.2 1096.2,128.1 1079.3,129.2 1062.4,133.5 1045.5,136.8 1028.6,136.2 1011.7,136.6 994.8,134.8 977.9,134.6 961.0,134.4 944.1,133.8 927.2,133.0 910.3,132.0 893.4,131.4 876.5,132.9 859.6,128.9 842.7,126.8 825.8,125.2 808.9,128.0 792.0,128.0 775.1,126.8 758.2,126.2 741.3,128.5 724.4,128.9 707.5,127.6 690.5,128.1 673.6,128.5 656.7,133.4 639.8,135.4 622.9,136.2 606.0,136.6 589.1,135.4 572.2,134.3 555.3,134.6 538.4,134.0 521.5,133.0 504.6,132.5 487.7,131.0 470.8,133.9 453.9,130.9 437.0,129.9 420.1,127.3 403.2,130.1 386.3,129.0 369.4,127.4" fill="#9dc8f1"/><polyline points="99.0,285.6 115.9,285.8 132.8,286.1 149.7,286.1 166.6,286.2 183.5,286.1 200.4,286.3 217.3,286.4 234.2,286.3 251.1,285.7 268.0,285.0 284.9,285.0 301.8,285.0 318.7,285.2 335.6,285.1 352.5,285.0 369.4,285.0 386.3,285.3 403.2,285.2 420.1,285.0 437.0,285.3 453.9,285.4 470.8,285.7 487.7,285.5 504.6,285.6 521.5,285.7 538.4,285.8 555.3,285.9 572.2,285.8 589.1,286.0 606.0,286.1 622.9,286.0 639.8,285.9 656.7,285.5 673.6,285.0 690.5,285.0 707.5,284.9 724.4,285.2 741.3,285.1 758.2,284.8 775.1,284.9 792.0,285.1 808.9,285.0 825.8,284.7 842.7,284.9 859.6,285.1 876.5,285.5 893.4,285.5 910.3,285.6 927.2,285.7 944.1,285.8 961.0,285.9 977.9,285.9 994.8,285.9 1011.7,286.1 1028.6,286.0 1045.5,286.1 1062.4,285.7 1079.3,285.1 1096.2,285.0 1113.1,284.9 1130.0,284.7 1146.9,284.9 1163.8,284.4 1180.7,284.6 1197.6,284.9 1214.5,285.2 1231.4,284.9 1248.3,285.2 1265.2,285.3 1282.1,285.2 1299.0,285.0" fill="none" stroke="#6b6b6b" stroke-width="1" stroke-linejoin="round"/><polyline points="99.0,272.9 115.9,273.2 132.8,273.9 149.7,274.0 166.6,274.0 183.5,273.8 200.4,274.3 217.3,274.5 234.2,274.2 251.1,273.0 268.0,271.5 284.9,271.5 301.8,271.6 318.7,272.0 335.6,271.8 352.5,271.6 369.4,271.5 386.3,272.1 403.2,272.0 420.1,271.6 437.0,272.1 453.9,272.5 470.8,273.1 487.7,272.7 504.6,272.8 521.5,273.0 538.4,273.3 555.3,273.4 572.2,273.3 589.1,273.6 606.0,273.8 622.9,273.6 639.8,273.3 656.7,272.7 673.6,271.6 690.5,271.5 707.5,271.4 724.4,271.9 741.3,271.7 758.2,271.0 775.1,271.3 792.0,271.7 808.9,271.5 825.8,271.0 842.7,271.3 859.6,271.8 876.5,272.7 893.4,272.7 910.3,272.8 927.2,273.0 944.1,273.2 961.0,273.4 977.9,273.5 994.8,273.5 1011.7,273.9 1028.6,273.6 1045.5,273.8 1062.4,273.0 1079.3,271.8 1096.2,271.5 1113.1,271.2 1130.0,271.0 1146.9,271.3 1163.8,270.2 1180.7,270.7 1197.6,271.3 1214.5,272.0 1231.4,271.3 1248.3,272.0 1265.2,272.2 1282.1,272.0 1299.0,271.5" fill="none" stroke="#6b6b6b" stroke-width="1" stroke-linejoin="round"/><polyline points="99.0,258.5 115.9,258.9 132.8,260.1 149.7,260.2 166.6,260.3 183.5,260.0 200.4,260.7 217.3,261.1 234.2,260.6 251.1,258.7 268.0,256.3 284.9,256.2 301.8,256.4 318.7,257.0 335.6,256.7 352.5,256.4 369.4,256.3 386.3,257.2 403.2,257.2 420.1,256.4 437.0,257.2 453.9,257.9 470.8,258.8 487.7,258.2 504.6,258.3 521.5,258.7 538.4,259.1 555.3,259.3 572.2,259.1 589.1,259.6 606.0,259.9 622.9,259.6 639.8,259.2 656.7,258.2 673.6,256.4 690.5,256.2 707.5,256.1 724.4,256.9 741.3,256.5 758.2,255.6 775.1,255.9 792.0,256.5 808.9,256.3 825.8,255.5 842.7,256.0 859.6,256.7 876.5,258.2 893.4,258.2 910.3,258.3 927.2,258.7 944.1,258.9 961.0,259.3 977.9,259.6 994.8,259.4 1011.7,260.1 1028.6,259.6 1045.5,259.9 1062.4,258.7 1079.3,256.7 1096.2,256.2 1113.1,255.8 1130.0,255.5 1146.9,255.9 1163.8,254.3 1180.7,255.1 1197.6,256.0 1214.5,257.0 1231.4,256.0 1248.3,257.0 1265.2,257.5 1282.1,257.0 1299.0,256.2" fill="none" stroke="#6b6b6b" stroke-width="1" stroke-linejoin="round"/><polyline points="99.0,245.2 115.9,245.9 132.8,247.4 149.7,247.6 166.6,247.7 183.5,247.3 200.4,248.2 217.3,248.8 234.2,248.1 251.1,245.5 268.0,242.3 284.9,242.2 301.8,242.5 318.7,243.3 335.6,242.9 352.5,242.5 369.4,242.3 386.3,243.5 403.2,243.4 420.1,242.5 437.0,243.5 453.9,244.4 470.8,245.7 487.7,244.8 504.6,245.0 521.5,245.5 538.4,246.1 555.3,246.4 572.2,246.1 589.1,246.8 606.0,247.2 622.9,246.8 639.8,246.2 656.7,244.8 673.6,242.5 690.5,242.2 707.5,242.1 724.4,243.1 741.3,242.6 758.2,241.3 775.1,241.8 792.0,242.6 808.9,242.3 825.8,241.2 842.7,241.9 859.6,242.9 876.5,244.8 893.4,244.8 910.3,245.0 927.2,245.5 944.1,245.9 961.0,246.4 977.9,246.7 994.8,246.5 1011.7,247.4 1028.6,246.8 1045.5,247.2 1062.4,245.5 1079.3,242.9 1096.2,242.2 1113.1,241.7 1130.0,241.2 1146.9,241.8 1163.8,239.6 1180.7,240.7 1197.6,241.9 1214.5,243.3 1231.4,241.9 1248.3,243.3 1265.2,243.9 1282.1,243.3 1299.0,242.2" fill="none" stroke="#6b6b6b" stroke-width="1" stroke-linejoin="round"/><polyline points="99.0,231.3 115.9,232.1 132.8,234.1 149.7,234.3 166.6,234.4 183.5,234.0 200.4,235.1 217.3,235.8 234.2,234.9 251.1,231.6 268.0,227.6 284.9,227.5 301.8,227.9 318.7,228.8 335.6,228.3 352.5,227.9 369.4,227.6 386.3,229.1 403.2,229.1 420.1,227.9 437.0,229.1 453.9,230.3 470.8,232.0 487.7,230.8 504.6,231.0 521.5,231.6 538.4,232.4 555.3,232.8 572.2,232.4 589.1,233.3 606.0,233.8 622.9,233.3 639.8,232.6 656.7,230.8 673.6,227.9 690.5,227.5 707.5,227.3 724.4,228.7 741.3,228.0 758.2,226.3 775.1,227.0 792.0,228.0 808.9,227.6 825.8,226.2 842.7,227.1 859.6,228.3 876.5,230.8 893.4,230.8 910.3,231.0 927.2,231.6 944.1,232.1 961.0,232.8 977.9,233.2 994.8,232.9 1011.7,234.1 1028.6,233.3 1045.5,233.8 1062.4,231.6 1079.3,228.3 1096.2,227.5 1113.1,226.8 1130.0,226.2 1146.9,227.0 1163.8,224.2 1180.7,225.5 1197.6,227.1 1214.5,228.8 1231.4,227.1 1248.3,228.8 1265.2,229.6 1282.1,228.8 1299.0,227.5" fill="none" stroke="#6b6b6b" stroke-width="1" stroke-linejoin="round"/><polyline points="99.0,215.2 115.9,216.2 132.8,218.7 149.7,218.9 166.6,219.1 183.5,218.5 200.4,219.9 217.3,220.8 234.2,219.7 251.1,215.6 268.0,210.6 284.9,210.4 301.8,210.9 318.7,212.1 335.6,211.5 352.5,210.9 369.4,210.6 386.3,212.5 403.2,212.4 420.1,210.9 437.0,212.5 453.9,213.9 470.8,216.0 487.7,214.6 504.6,214.8 521.5,215.6 538.4,216.6 555.3,217.0 572.2,216.6 589.1,217.7 606.0,218.3 622.9,217.7 639.8,216.8 656.7,214.6 673.6,210.9 690.5,210.4 707.5,210.2 724.4,211.9 741.3,211.1 758.2,209.0 775.1,209.8 792.0,211.1 808.9,210.6 825.8,208.8 842.7,210.0 859.6,211.5 876.5,214.6 893.4,214.6 910.3,214.8 927.2,215.6 944.1,216.2 961.0,217.0 977.9,217.5 994.8,217.2 1011.7,218.7 1028.6,217.7 1045.5,218.3 1062.4,215.6 1079.3,211.5 1096.2,210.4 1113.1,209.6 1130.0,208.8 1146.9,209.8 1163.8,206.3 1180.7,208.0 1197.6,210.0 1214.5,212.1 1231.4,210.0 1248.3,212.1 1265.2,213.1 1282.1,212.1 1299.0,210.4" fill="none" stroke="#6b6b6b" stroke-width="1" stroke-linejoin="round"/><polyline points="284.9,200.5 301.8,201.1 318.7,202.2 335.6,201.6 352.5,201.0 369.4,200.8" fill="none" stroke="#6b6b6b" stroke-width="1" stroke-linejoin="round"/><polyline points="284.9,189.8 301.8,190.5 318.7,191.5 335.6,190.9 352.5,190.3 369.4,190.1" fill="none" stroke="#6b6b6b" stroke-width="1" stroke-linejoin="round"/><polyline points="284.9,178.5 301.8,179.2 318.7,180.2 335.6,179.6 352.5,179.0 369.4,178.8" fill="none" stroke="#6b6b6b" stroke-width="1" stroke-linejoin="round"/><polyline points="284.9,167.7 301.8,168.6 318.7,169.5 335.6,168.9 352.5,168.3 369.4,168.1" fill="none" stroke="#6b6b6b" stroke-width="1" stroke-linejoin="round"/><polyline points="284.9,156.2 301.8,157.1 318.7,158.0 335.6,157.4 352.5,156.8 369.4,156.7" fill="none" stroke="#6b6b6b" stroke-width="1" stroke-linejoin="round"/><polyline points="284.9,145.9 301.8,146.9 318.7,147.7 335.6,147.1 352.5,146.5 369.4,146.4" fill="none" stroke="#6b6b6b" stroke-width="1" stroke-linejoin="round"/><polyline points="369.4,201.5 386.3,203.4 403.2,203.4 420.1,201.8 437.0,203.5 453.9,204.9 470.8,207.1 487.7,205.5 504.6,205.8 521.5,206.6 538.4,207.6 555.3,208.0 572.2,207.6 589.1,208.7 606.0,209.4 622.9,208.8 639.8,207.9 656.7,205.8 673.6,201.9 690.5,201.4 707.5,201.2 724.4,202.9 741.3,202.1 758.2,200.0 775.1,200.8 792.0,202.1 808.9,201.6 825.8,199.7 842.7,200.9 859.6,202.5 876.5,205.7 893.4,205.5 910.3,205.8 927.2,206.6 944.1,207.2 961.0,208.0 977.9,208.5 994.8,208.2 1011.7,209.8 1028.6,208.8 1045.5,209.4 1062.4,206.7 1079.3,202.5 1096.2,201.4 1113.1,200.6 1130.0,199.8 1146.9,200.9 1163.8,197.4 1180.7,199.1 1197.6,201.0 1214.5,203.1 1231.4,200.8 1248.3,203.0 1265.2,204.1 1282.1,203.1 1299.0,201.3" fill="none" stroke="#6b6b6b" stroke-width="1" stroke-linejoin="round"/><polyline points="369.4,192.5 386.3,194.3 403.2,194.5 420.1,192.7 437.0,194.5 453.9,195.8 470.8,198.1 487.7,196.4 504.6,196.9 521.5,197.6 538.4,198.6 555.3,199.0 572.2,198.7 589.1,199.8 606.0,200.5 622.9,199.9 639.8,199.1 656.7,196.9 673.6,192.9 690.5,192.5 707.5,192.2 724.4,193.8 741.3,193.1 758.2,191.0 775.1,191.7 792.0,193.0 808.9,192.6 825.8,190.6 842.7,191.9 859.6,193.5 876.5,196.8 893.4,196.5 910.3,196.8 927.2,197.6 944.1,198.2 961.0,199.0 977.9,199.4 994.8,199.2 1011.7,200.8 1028.6,199.9 1045.5,200.5 1062.4,197.7 1079.3,193.6 1096.2,192.5 1113.1,191.6 1130.0,190.8 1146.9,191.9 1163.8,188.5 1180.7,190.1 1197.6,192.0 1214.5,194.1 1231.4,191.7 1248.3,194.0 1265.2,195.2 1282.1,194.1 1299.0,192.1" fill="none" stroke="#6b6b6b" stroke-width="1" stroke-linejoin="round"/><polyline points="369.4,183.1 386.3,184.8 403.2,185.2 420.1,183.2 437.0,185.1 453.9,186.4 470.8,188.8 487.7,186.9 504.6,187.6 521.5,188.2 538.4,189.2 555.3,189.7 572.2,189.4 589.1,190.5 606.0,191.2 622.9,190.7 639.8,189.8 656.7,187.7 673.6,183.6 690.5,183.2 707.5,182.8 724.4,184.4 741.3,183.7 758.2,181.6 775.1,182.3 792.0,183.6 808.9,183.2 825.8,181.1 842.7,182.5 859.6,184.1 876.5,187.5 893.4,187.0 910.3,187.4 927.2,188.2 944.1,188.9 961.0,189.6 977.9,190.1 994.8,189.9 1011.7,191.5 1028.6,190.7 1045.5,191.3 1062.4,188.4 1079.3,184.3 1096.2,183.2 1113.1,182.3 1130.0,181.5 1146.9,182.6 1163.8,179.3 1180.7,180.8 1197.6,182.6 1214.5,184.7 1231.4,182.2 1248.3,184.6 1265.2,185.9 1282.1,184.7 1299.0,182.6" fill="none" stroke="#6b6b6b" stroke-width="1" stroke-linejoin="round"/><polyline points="369.4,172.2 386.3,173.9 403.2,174.4 420.1,172.3 437.0,174.3 453.9,175.5 470.8,178.1 487.7,176.0 504.6,176.8 521.5,177.4 538.4,178.4 555.3,178.9 572.2,178.6 589.1,179.7 606.0,180.5 622.9,180.0 639.8,179.2 656.7,177.1 673.6,172.8 690.5,172.4 707.5,172.0 724.4,173.5 741.3,172.9 758.2,170.7 775.1,171.4 792.0,172.7 808.9,172.4 825.8,170.2 842.7,171.6 859.6,173.3 876.5,176.8 893.4,176.1 910.3,176.5 927.2,177.4 944.1,178.1 961.0,178.8 977.9,179.2 994.8,179.1 1011.7,180.8 1028.6,180.0 1045.5,180.6 1062.4,177.7 1079.3,173.5 1096.2,172.4 1113.1,171.5 1130.0,170.7 1146.9,171.9 1163.8,168.6 1180.7,170.1 1197.6,171.7 1214.5,173.8 1231.4,171.1 1248.3,173.7 1265.2,175.1 1282.1,173.8 1299.0,171.6" fill="none" stroke="#6b6b6b" stroke-width="1" stroke-linejoin="round"/><polyline points="369.4,162.1 386.3,163.8 403.2,164.4 420.1,162.1 437.0,164.3 453.9,165.5 470.8,168.1 487.7,165.8 504.6,166.8 521.5,167.4 538.4,168.4 555.3,168.9 572.2,168.6 589.1,169.7 606.0,170.6 622.9,170.1 639.8,169.3 656.7,167.2 673.6,162.8 690.5,162.4 707.5,162.0 724.4,163.5 741.3,162.9 758.2,160.7 775.1,161.4 792.0,162.6 808.9,162.4 825.8,160.0 842.7,161.5 859.6,163.3 876.5,166.9 893.4,166.0 910.3,166.5 927.2,167.4 944.1,168.1 961.0,168.8 977.9,169.1 994.8,169.1 1011.7,170.8 1028.6,170.1 1045.5,170.7 1062.4,167.7 1079.3,163.5 1096.2,162.4 1113.1,161.5 1130.0,160.7 1146.9,161.9 1163.8,158.7 1180.7,160.1 1197.6,161.7 1214.5,163.8 1231.4,161.0 1248.3,163.6 1265.2,165.1 1282.1,163.8 1299.0,161.5" fill="none" stroke="#6b6b6b" stroke-width="1" stroke-linejoin="round"/><polyline points="369.4,150.5 386.3,152.2 403.2,153.0 420.1,150.5 437.0,152.8 453.9,154.0 470.8,156.7 487.7,154.2 504.6,155.4 521.5,155.9 538.4,156.9 555.3,157.5 572.2,157.2 589.1,158.3 606.0,159.3 622.9,158.8 639.8,158.0 656.7,156.0 673.6,151.4 690.5,151.0 707.5,150.5 724.4,152.0 741.3,151.4 758.2,149.2 775.1,149.9 792.0,151.1 808.9,150.9 825.8,148.4 842.7,149.9 859.6,151.8 876.5,155.6 893.4,154.5 910.3,155.0 927.2,155.9 944.1,156.7 961.0,157.3 977.9,157.6 994.8,157.7 1011.7,159.4 1028.6,158.8 1045.5,159.4 1062.4,156.3 1079.3,152.1 1096.2,151.0 1113.1,150.1 1130.0,149.3 1146.9,150.5 1163.8,147.4 1180.7,148.7 1197.6,150.2 1214.5,152.3 1231.4,149.3 1248.3,152.0 1265.2,153.7 1282.1,152.3 1299.0,149.8" fill="none" stroke="#6b6b6b" stroke-width="1" stroke-linejoin="round"/><polyline points="369.4,139.6 386.3,141.2 403.2,142.2 420.1,139.6 437.0,142.0 453.9,143.1 470.8,146.0 487.7,143.3 504.6,144.6 521.5,145.1 538.4,146.1 555.3,146.7 572.2,146.4 589.1,147.5 606.0,148.6 622.9,148.1 639.8,147.3 656.7,145.3 673.6,140.6 690.5,140.2 707.5,139.7 724.4,141.1 741.3,140.6 758.2,138.3 775.1,139.0 792.0,140.2 808.9,140.1 825.8,137.5 842.7,139.0 859.6,141.0 876.5,144.9 893.4,143.6 910.3,144.1 927.2,145.1 944.1,145.9 961.0,146.5 977.9,146.8 994.8,146.9 1011.7,148.7 1028.6,148.1 1045.5,148.7 1062.4,145.6 1079.3,141.3 1096.2,140.2 1113.1,139.3 1130.0,138.5 1146.9,139.8 1163.8,136.7 1180.7,138.0 1197.6,139.3 1214.5,141.4 1231.4,138.3 1248.3,141.1 1265.2,142.9 1282.1,141.4 1299.0,138.8" fill="none" stroke="#6b6b6b" stroke-width="1" stroke-linejoin="round"/><polyline points="369.4,127.4 386.3,129.0 403.2,130.1 420.1,127.3 437.0,129.9 453.9,130.9 470.8,133.9 487.7,131.0 504.6,132.5 521.5,133.0 538.4,134.0 555.3,134.6 572.2,134.3 589.1,135.4 606.0,136.6 622.9,136.2 639.8,135.4 656.7,133.4 673.6,128.5 690.5,128.1 707.5,127.6 724.4,128.9 741.3,128.5 758.2,126.2 775.1,126.8 792.0,128.0 808.9,128.0 825.8,125.2 842.7,126.8 859.6,128.9 876.5,132.9 893.4,131.4 910.3,132.0 927.2,133.0 944.1,133.8 961.0,134.4 977.9,134.6 994.8,134.8 1011.7,136.6 1028.6,136.2 1045.5,136.8 1062.4,133.5 1079.3,129.2 1096.2,128.1 1113.1,127.2 1130.0,126.4 1146.9,127.7 1163.8,124.8 1180.7,125.9 1197.6,127.2 1214.5,129.3 1231.4,125.9 1248.3,128.9 1265.2,130.8 1282.1,129.3 1299.0,126.5" fill="none" stroke="#6b6b6b" stroke-width="1" stroke-linejoin="round"/><polyline points="369.4,118.2 386.3,119.7 403.2,121.0 420.1,118.0 437.0,120.7 453.9,121.7 470.8,124.8 487.7,121.7 504.6,123.4 521.5,123.8 538.4,124.8 555.3,125.4 572.2,125.2 589.1,126.3 606.0,127.5 622.9,127.1 639.8,126.3 656.7,124.4 673.6,119.3 690.5,119.0 707.5,118.4 724.4,119.7 741.3,119.3 758.2,117.0 775.1,117.6 792.0,118.8 808.9,118.8 825.8,115.9 842.7,117.6 859.6,119.7 876.5,123.8 893.4,122.1 910.3,122.8 927.2,123.8 944.1,124.6 961.0,125.2 977.9,125.4 994.8,125.6 1011.7,127.5 1028.6,127.1 1045.5,127.7 1062.4,124.4 1079.3,120.1 1096.2,119.0 1113.1,118.0 1130.0,117.2 1146.9,118.6 1163.8,115.7 1180.7,116.8 1197.6,118.0 1214.5,120.1 1231.4,116.6 1248.3,119.7 1265.2,121.7 1282.1,120.1 1299.0,117.2" fill="none" stroke="#6b6b6b" stroke-width="1" stroke-linejoin="round"/><line x1="369.4" y1="118.2" x2="369.4" y2="210.6" stroke="#e6e6ee" stroke-opacity=".7" stroke-width=".8"/></g>
<path d="M99.0 297.5H1299.0" stroke="#c0d0e0" stroke-width="1" fill="none"/>
<path d="M98.5 297.0V307.0" stroke="#c0d0e0" stroke-width="1"/>
<text x="99.0" y="316.0" text-anchor="middle" class="ax">13. Mar</text>
<path d="M199.5 297.0V307.0" stroke="#c0d0e0" stroke-width="1"/>
<text x="200.0" y="316.0" text-anchor="middle" class="ax">06:00</text>
<path d="M301.5 297.0V307.0" stroke="#c0d0e0" stroke-width="1"/>
<text x="302.0" y="316.0" text-anchor="middle" class="ax">12:00</text>
<path d="M402.5 297.0V307.0" stroke="#c0d0e0" stroke-width="1"/>
<text x="403.0" y="316.0" text-anchor="middle" class="ax">18:00</text>
<path d="M504.5 297.0V307.0" stroke="#c0d0e0" stroke-width="1"/>
<text x="505.0" y="316.0" text-anchor="middle" class="ax">14. Mar</text>
<path d="M605.5 297.0V307.0" stroke="#c0d0e0" stroke-width="1"/>
<text x="606.0" y="316.0" text-anchor="middle" class="ax">06:00</text>
<path d="M706.5 297.0V307.0" stroke="#c0d0e0" stroke-width="1"/>
<text x="707.0" y="316.0" text-anchor="middle" class="ax">12:00</text>
<path d="M808.5 297.0V307.0" stroke="#c0d0e0" stroke-width="1"/>
<text x="809.0" y="316.0" text-anchor="middle" class="ax">18:00</text>
<path d="M909.5 297.0V307.0" stroke="#c0d0e0" stroke-width="1"/>
<text x="910.0" y="316.0" text-anchor="middle" class="ax">15. Mar</text>
<path d="M1011.5 297.0V307.0" stroke="#c0d0e0" stroke-width="1"/>
<text x="1012.0" y="316.0" text-anchor="middle" class="ax">06:00</text>
<path d="M1112.5 297.0V307.0" stroke="#c0d0e0" stroke-width="1"/>
<text x="1113.0" y="316.0" text-anchor="middle" class="ax">12:00</text>
<path d="M1213.5 297.0V307.0" stroke="#c0d0e0" stroke-width="1"/>
<text x="1214.0" y="316.0" text-anchor="middle" class="ax">18:00</text>
<text x="84.5" y="295.0" text-anchor="end" class="ax">0 Watt</text>
<text x="84.5" y="232.0" text-anchor="end" class="ax">1000 Watt</text>
<text x="84.5" y="169.0" text-anchor="end" class="ax">2000 Watt</text>
<text x="84.5" y="106.0" text-anchor="end" class="ax">3000 Watt</text>
<text transform="translate(24.0,171.3) rotate(-90)" text-anchor="middle" class="ut">Unit</text>
<g>
<path d="M310.5 344.0V384.0" stroke="#d6d6d6" stroke-width="1"/>
<path d="M508.5 344.0V384.0" stroke="#d6d6d6" stroke-width="1"/>
<path d="M706.5 344.0V384.0" stroke="#d6d6d6" stroke-width="1"/>
<path d="M904.5 344.0V384.0" stroke="#d6d6d6" stroke-width="1"/>
<path d="M1102.5 344.0V384.0" stroke="#d6d6d6" stroke-width="1"/>
<path d="M293.5 369.0 C293.5 369.0 303.4 376.5 310.0 376.5 C316.6 376.5 319.9 376.5 326.5 376.5 C333.1 376.5 336.4 373.4 343.0 373.4 C349.6 373.4 352.9 376.7 359.5 376.7 C366.1 376.7 369.4 376.7 376.0 376.7 C382.6 376.7 385.9 373.4 392.5 373.4 C399.1 373.4 402.4 373.4 409.0 373.4 C415.6 373.4 418.9 354.6 425.5 354.6 C432.1 354.6 435.4 372.9 442.0 372.9 C448.6 372.9 451.9 369.5 458.5 369.5 C465.1 369.5 468.4 376.7 475.0 376.7 C481.6 376.7 484.9 373.6 491.5 373.4 C498.1 373.2 501.4 373.4 508.0 373.2 C514.6 373.0 517.9 365.6 524.5 365.6 C531.1 365.6 534.4 376.3 541.0 376.5 C547.6 376.7 550.9 376.7 557.5 376.7 C564.1 376.7 567.4 376.7 574.0 376.7 C580.6 376.7 583.9 376.7 590.5 376.7 C597.1 376.7 600.4 376.7 607.0 376.7 C613.6 376.7 616.9 380.6 623.5 380.6 C630.1 380.6 633.4 376.7 640.0 376.7 C646.6 376.7 649.9 380.6 656.5 380.6 C663.1 380.6 666.4 373.4 673.0 373.4 C679.6 373.4 682.9 373.4 689.5 373.4 C696.1 373.4 699.4 369.5 706.0 369.5 C712.6 369.5 715.9 369.5 722.5 369.5 C729.1 369.5 732.4 369.5 739.0 369.5 C745.6 369.5 748.9 373.4 755.5 373.4 C762.1 373.4 765.4 369.5 772.0 369.5 C778.6 369.5 781.9 369.5 788.5 369.5 C795.1 369.5 798.4 369.5 805.0 369.5 C811.6 369.5 814.9 354.6 821.5 354.6 C828.1 354.6 831.4 373.4 838.0 373.4 C844.6 373.4 847.9 373.4 854.5 373.4 C861.1 373.4 864.4 376.7 871.0 376.7 C877.6 376.7 880.9 369.5 887.5 369.5 C894.1 369.5 897.4 372.6 904.0 373.4 C910.6 374.2 913.9 374.2 920.5 374.2 C927.1 374.2 930.4 373.0 937.0 373.0 C943.6 373.0 946.9 373.0 953.5 373.4 C960.1 373.8 963.4 376.7 970.0 376.7 C976.6 376.7 979.9 373.4 986.5 373.4 C993.1 373.4 996.4 376.7 1003.0 376.7 C1009.6 376.7 1012.9 376.7 1019.5 376.7 C1026.1 376.7 1029.4 376.7 1036.0 376.7 C1042.6 376.7 1045.9 376.7 1052.5 376.7 C1059.1 376.7 1062.4 373.4 1069.0 373.4 C1075.6 373.4 1078.9 373.4 1085.5 373.4 C1092.1 373.4 1095.4 373.4 1102.0 373.4 C1108.6 373.4 1111.9 373.4 1118.5 373.4 C1125.1 373.4 1128.4 373.4 1135.0 373.4 C1141.6 373.4 1144.9 373.4 1151.5 373.4 C1158.1 373.4 1161.4 373.4 1168.0 370.5 C1174.6 367.6 1177.9 347.1 1184.5 347.1 C1191.1 347.1 1194.4 354.6 1201.0 354.6 C1207.6 354.6 1210.9 351.0 1217.5 351.0 C1224.1 351.0 1227.4 361.9 1234.0 365.6 C1240.6 369.3 1243.9 369.5 1250.5 369.5 C1257.1 369.5 1260.4 369.5 1267.0 369.5 C1273.6 369.5 1283.5 369.5 1283.5 369.5 L1283.5 384.0 L293.5 384.0 Z" fill="#4572a7" fill-opacity="0.05"/>
<path d="M293.5 369.0 C293.5 369.0 303.4 376.5 310.0 376.5 C316.6 376.5 319.9 376.5 326.5 376.5 C333.1 376.5 336.4 373.4 343.0 373.4 C349.6 373.4 352.9 376.7 359.5 376.7 C366.1 376.7 369.4 376.7 376.0 376.7 C382.6 376.7 385.9 373.4 392.5 373.4 C399.1 373.4 402.4 373.4 409.0 373.4 C415.6 373.4 418.9 354.6 425.5 354.6 C432.1 354.6 435.4 372.9 442.0 372.9 C448.6 372.9 451.9 369.5 458.5 369.5 C465.1 369.5 468.4 376.7 475.0 376.7 C481.6 376.7 484.9 373.6 491.5 373.4 C498.1 373.2 501.4 373.4 508.0 373.2 C514.6 373.0 517.9 365.6 524.5 365.6 C531.1 365.6 534.4 376.3 541.0 376.5 C547.6 376.7 550.9 376.7 557.5 376.7 C564.1 376.7 567.4 376.7 574.0 376.7 C580.6 376.7 583.9 376.7 590.5 376.7 C597.1 376.7 600.4 376.7 607.0 376.7 C613.6 376.7 616.9 380.6 623.5 380.6 C630.1 380.6 633.4 376.7 640.0 376.7 C646.6 376.7 649.9 380.6 656.5 380.6 C663.1 380.6 666.4 373.4 673.0 373.4 C679.6 373.4 682.9 373.4 689.5 373.4 C696.1 373.4 699.4 369.5 706.0 369.5 C712.6 369.5 715.9 369.5 722.5 369.5 C729.1 369.5 732.4 369.5 739.0 369.5 C745.6 369.5 748.9 373.4 755.5 373.4 C762.1 373.4 765.4 369.5 772.0 369.5 C778.6 369.5 781.9 369.5 788.5 369.5 C795.1 369.5 798.4 369.5 805.0 369.5 C811.6 369.5 814.9 354.6 821.5 354.6 C828.1 354.6 831.4 373.4 838.0 373.4 C844.6 373.4 847.9 373.4 854.5 373.4 C861.1 373.4 864.4 376.7 871.0 376.7 C877.6 376.7 880.9 369.5 887.5 369.5 C894.1 369.5 897.4 372.6 904.0 373.4 C910.6 374.2 913.9 374.2 920.5 374.2 C927.1 374.2 930.4 373.0 937.0 373.0 C943.6 373.0 946.9 373.0 953.5 373.4 C960.1 373.8 963.4 376.7 970.0 376.7 C976.6 376.7 979.9 373.4 986.5 373.4 C993.1 373.4 996.4 376.7 1003.0 376.7 C1009.6 376.7 1012.9 376.7 1019.5 376.7 C1026.1 376.7 1029.4 376.7 1036.0 376.7 C1042.6 376.7 1045.9 376.7 1052.5 376.7 C1059.1 376.7 1062.4 373.4 1069.0 373.4 C1075.6 373.4 1078.9 373.4 1085.5 373.4 C1092.1 373.4 1095.4 373.4 1102.0 373.4 C1108.6 373.4 1111.9 373.4 1118.5 373.4 C1125.1 373.4 1128.4 373.4 1135.0 373.4 C1141.6 373.4 1144.9 373.4 1151.5 373.4 C1158.1 373.4 1161.4 373.4 1168.0 370.5 C1174.6 367.6 1177.9 347.1 1184.5 347.1 C1191.1 347.1 1194.4 354.6 1201.0 354.6 C1207.6 354.6 1210.9 351.0 1217.5 351.0 C1224.1 351.0 1227.4 361.9 1234.0 365.6 C1240.6 369.3 1243.9 369.5 1250.5 369.5 C1257.1 369.5 1260.4 369.5 1267.0 369.5 C1273.6 369.5 1283.5 369.5 1283.5 369.5" fill="none" stroke="#4572c4" stroke-width="1"/>
<rect x="112.0" y="344.0" width="1172.5" height="40" fill="rgb(102,133,194)" fill-opacity="0.3"/>
<text x="117.0" y="380.0" class="nl">13. Mar</text>
<text x="314.0" y="380.0" class="nl">12:00</text>
<text x="512.0" y="380.0" class="nl">14. Mar</text>
<text x="710.0" y="380.0" class="nl">12:00</text>
<text x="908.0" y="380.0" class="nl">15. Mar</text>
<text x="1106.0" y="380.0" class="nl">12:00</text>
<path d="M99.0 344.5H1299.0" stroke="#b2b1b6" stroke-width="1" fill="none"/>
<path d="M112.5 344.0V384.0 M1284.5 344.0V384.0" stroke="#b2b1b6" stroke-width="1" fill="none"/>
<rect x="108.0" y="356.5" width="9" height="15" rx="1.5" fill="#fff" stroke="#777" stroke-width="1"/>
<path d="M111.5 360.5v7M114.5 360.5v7" stroke="#666" stroke-width="1"/>
<rect x="1280.0" y="356.5" width="9" height="15" rx="1.5" fill="#fff" stroke="#777" stroke-width="1"/>
<path d="M1283.5 360.5v7M1286.5 360.5v7" stroke="#666" stroke-width="1"/>
<rect x="99.0" y="384.5" width="1200" height="14" fill="#cccccc"/>
<rect x="99.5" y="384.5" width="13" height="14" fill="#ebe7e8" stroke="#bbb" stroke-width="1"/>
<rect x="1285.5" y="384.5" width="13" height="14" fill="#ebe7e8" stroke="#bbb" stroke-width="1"/>
<path d="M108.0 388.5l-3.5 3 3.5 3z" fill="#222"/>
<path d="M1290.5 388.5l3.5 3 -3.5 3z" fill="#222"/>
<path d="M695.5 389.0v5M698.5 389.0v5M701.5 389.0v5" stroke="#222" stroke-width="1"/>
</g>
</svg>
   <span class="abs" style="left:99px;top:10px;line-height:22px;font-size:12px;color:#4a4a4a;font-family:'DejaVu Sans','Liberation Sans',sans-serif;letter-spacing:-0.300px;transform:scaleX(.91);transform-origin:0 0">Zoom</span>
   <div class="zb" style="left:136px">1m</div><div class="zb" style="left:173px">3m</div><div class="zb" style="left:210px">6m</div><div class="zb" style="left:247px;color:#333">YTD</div><div class="zb" style="left:284px">1y</div><div class="zb" style="left:321px">All</div>
   <span class="abs dj" style="left:1044px;top:10px">From</span>
   <div class="abs di" style="left:1079px;top:10px">Mar 13, 2017</div>
   <span class="abs dj" style="left:1185px;top:10px">To</span>
   <div class="abs di" style="left:1205px;top:10px">Mar 15, 2017</div>
   <i class="dot" style="left:36.69999999999999px;top:415.29999999999995px;background:#7cb5ec"></i>
<i class="dot" style="left:252.70000000000005px;top:415.29999999999995px;background:#434348"></i>
<i class="dot" style="left:468.70000000000005px;top:415.29999999999995px;background:#90ed7d"></i>
<span class="lg" style="left:488.5px;top:415.29999999999995px;">zeus-esx02</span>
<i class="dot" style="left:685px;top:415.29999999999995px;background:#f7a35c"></i>
<span class="lg" style="left:704px;top:415.29999999999995px;">zeus-esx03.</span>
<i class="dot" style="left:901px;top:415.29999999999995px;background:#8085e9"></i>
<span class="lg" style="left:920px;top:415.29999999999995px;">zeus-esx06</span>
<i class="dot" style="left:36.69999999999999px;top:429.20000000000005px;background:#f15c80"></i>
<i class="dot" style="left:252.70000000000005px;top:429.20000000000005px;background:#e4d354"></i>
<i class="dot" style="left:490px;top:429.20000000000005px;background:#2b908f"></i>
<span class="lg" style="left:509.5px;top:429.20000000000005px;">demeter-esx01</span>
<i class="dot" style="left:727px;top:429.20000000000005px;background:#f45b5b"></i>
<span class="lg" style="left:746px;top:429.20000000000005px;">demeter-esx02</span>
<i class="dot" style="left:964px;top:429.20000000000005px;background:#91e8e1"></i>
<span class="lg" style="left:983px;top:429.20000000000005px;">shirkae2670<span style="display:inline-block;clip-path:inset(7.400px 0 0 0)">-td20</span></span>
<i class="dot" style="left:36.69999999999999px;top:443.20000000000005px;background:#7cb5ec"></i>
<i class="dot" style="left:542.7px;top:443.20000000000005px;background:#90ed7d"></i>
<span class="lg" style="left:563px;top:443.20000000000005px;">shirkae2670</span>
<i class="dot" style="left:793px;top:443.20000000000005px;background:#f7a35c"></i>
<span class="lg" style="left:812px;top:443.20000000000005px;width:69px;overflow:hidden">shirkae2670</span>
<i class="dot" style="left:1046px;top:443.20000000000005px;background:#8085e9"></i>
<span class="lg" style="left:1065px;top:443.20000000000005px;">shirkae2670</span>
  </div>
 </div>
 <div class="cardw" style="left:30px;width:457px"><div class="card"><div class="ci"><span class="abs" style="left:10.500px;top:6px;font-size:14px;color:#555;line-height:16px">€</span></div><div class="ct">Annual Cost</div><div class="cv"><div class="pill">7247€</div></div></div></div>
 <div class="cardw" style="left:487px;width:457px"><div class="card"><div class="ci" style="width:34px"><svg class="abs" style="left:11px;top:9.500px" width="12.300" height="12.300" viewBox="0 0 12 12"><circle cx="6" cy="6" r="6" fill="#6a6a6a"/><path d="M6.300 1.300c1-.5 2.200-.2 3 .5-.2.900-1.200.700-1.700 1.400s.7 1.500.2 2.300-1.400-.200-1.400-1S5.200 3.800 5.700 3s0-1.200.6-1.700zM3.600 7.300c.7-.3 1.500.2 1.700.9s-.2 1.900-.9 1.800S2.900 7.700 3.600 7.300zM2.300 2.600c.6-.4 1.300-.1 1.400.5s-.6.900-.8 1.500-.9.600-1-.1.000-1.500.400-1.900z" fill="#fafafa" opacity=".85"/></svg></div><div class="ct" style="left:46px">Annual CO2 Emission</div><div class="cv"><div class="pill">5550 Kg</div></div></div></div>
 <div class="cardw" style="left:944px;width:457px"><div class="card"><div class="ci" style="width:36px"><svg class="abs" style="left:11px;top:8.300px" width="14.400" height="14.400" viewBox="0 0 14 14"><g transform="translate(7 7) rotate(45) scale(1.0) translate(-7 -7.800)" fill="#686868"><rect x="3.700" y="0" width="1.900" height="4.500" rx=".8"/><rect x="8.400" y="0" width="1.900" height="4.500" rx=".8"/><path d="M2 4.300h10v2.700a5 5 0 0 1-10 0z"/><rect x="6.150" y="11.500" width="1.700" height="4.200"/></g></svg></div><div class="ct" style="left:48px">Annual Current KWh</div><div class="cv"><div class="pill">32938 kWh</div></div></div></div>
 <!-- gear tab & scrollbar -->
 <div class="abs" style="left:1412px;top:136px;width:10px;height:572.500px;background:#c1c1c1"></div>
 <svg class="abs" style="left:1415px;top:752px" width="7" height="5"><path d="M0 0h7L3.500 4z" fill="#505050"/></svg>
 <div class="abs" style="left:1387px;top:102px;width:40px;height:34.500px;background:#0a0a0a;border-radius:6px 0 0 6px">
  <svg class="abs" style="left:5px;top:6px" width="24" height="22" viewBox="0 0 24 22"><g fill="none" stroke="#fff"><circle cx="8" cy="11" r="4.100" stroke-width="3"/><circle cx="8" cy="11" r="6.300" stroke-width="2.200" stroke-dasharray="2.750 2.198" transform="rotate(-12 8 11)"/><circle cx="19" cy="5.300" r="2.300" stroke-width="1.700"/><circle cx="19" cy="5.300" r="3.800" stroke-width="1.600" stroke-dasharray="1.600 1.385"/><circle cx="19" cy="16.300" r="2.300" stroke-width="1.700"/><circle cx="19" cy="16.300" r="3.800" stroke-width="1.600" stroke-dasharray="1.600 1.385"/></g></svg>
 </div>
</div>

<span class="tn" style="left:960px">OFF</span>
<div class="abs" style="left:983.500px;top:11.400px;width:26px;height:12.600px;border-radius:4px;background:#cfcfcf"><i class="abs" style="left:13.500px;top:.5px;width:12px;height:11.600px;border-radius:3.500px;background:#fff"></i></div>
<span class="tn" style="left:1011px;color:#6cb41a;-webkit-text-stroke-color:#6cb41a">ON</span>
<svg class="abs" style="left:1041px;top:12.500px" width="10.500" height="11.500" viewBox="0 0 11 12" preserveAspectRatio="none"><path d="M0 2h11v10H0zM1 4.500v2h2v-2zm3 0v2h2v-2zm3 0v2h3v-2zM1 7.300v1.700h2V7.300zm3 0v1.700h2V7.300zm3 0v1.700h3V7.300zM1 9.800V11h2V9.800zm3 0V11h2V9.800zm3 0V11h3V9.800z" fill="#c4c4c4" fill-rule="evenodd"/><path d="M2.500 0v3M8.500 0v3" stroke="#c4c4c4" stroke-width="1.400"/></svg>
<span class="tn" style="left:1058px">Period filters</span>
<svg class="abs" style="left:1138px;top:13.500px" width="10.500" height="10.500" viewBox="0 0 12 12"><circle cx="6" cy="6" r="3.300" fill="none" stroke="#c4c4c4" stroke-width="1.500"/><path d="M6 0v3.500M6 8.500V12M0 6h3.500M8.500 6H12" stroke="#c4c4c4" stroke-width="1.600"/></svg>
<span class="tn" style="left:1155px">Selection filters</span>
<svg class="abs" style="left:1248px;top:13px;width:11px;height:11px;fill:#c4c4c4" viewBox="0 0 14 14"><path d="M13.800 3.300c.2.800.2 1.800-.3 2.700-.9 1.700-2.800 2.500-4.600 2l-5.700 5.600c-.6.600-1.700.600-2.300 0-.6-.6-.6-1.700 0-2.300l5.700-5.600c-.5-1.800.3-3.700 2-4.600.9-.5 1.900-.5 2.700-.3L8.900 3.200l.5 1.900 1.900.5z" fill="#c4c4c4"/><circle cx="2.100" cy="11.900" r=".75" fill="#282828"/></svg>
<span class="tn" style="left:1262px">Settings</span>
<svg class="abs" style="left:1321px;top:12px" width="11" height="11" viewBox="0 0 14 14"><path d="M5 0h4v4.500h2.800L7 9.300 2.200 4.500H5zM0 9.500h3.800L7 12l3.200-2.500H14V13.500H0z" fill="#c4c4c4"/></svg>
<span class="tn" style="left:1335px">Documentation</span>
<svg class="abs" style="left:1433px;top:13.500px" width="10.500" height="10" viewBox="0 0 12 12" preserveAspectRatio="none"><path d="M.3 0h1.300v12H.3zM2.200 1c1.500-.8 3-.6 4.500 0s3 .6 5-.3v6c-2 .9-3.500.9-5 .3s-3-.8-4.500 0z" fill="#c4c4c4"/></svg>
<span class="tn" style="left:1447px">DCScope status :</span>
<i class="abs" style="left:1539px;top:12px;width:10px;height:10px;border-radius:5px;background:radial-gradient(circle at 45% 40%,#3bdc0c 0,#2fc204 55%,#3d7a10 100%)"></i>
<svg class="abs" style="left:1555px;top:17px" width="9" height="5"><path d="M0 0h8.500L4.250 4.500z" fill="#c4c4c4"/></svg>
<svg class="abs" style="left:1587px;top:13.500px" width="8.500" height="10" viewBox="0 0 10 11" preserveAspectRatio="none"><circle cx="5" cy="2.800" r="2.800" fill="#c4c4c4"/><path d="M0 11V8.500C0 6.500 1.500 5.500 3 5.500h4c1.500 0 3 1 3 3V11z" fill="#c4c4c4"/></svg>
<svg class="abs" style="left:1599px;top:17px" width="9" height="5"><path d="M0 0h8.500L4.250 4.500z" fill="#c4c4c4"/></svg>

<div id="foot"><span style="color:#aaa">Contact</span><br>2017 © EasyVirt<br>Release: 4.0.0 Build: 1965_170307</div>
</div>
</body></html>
